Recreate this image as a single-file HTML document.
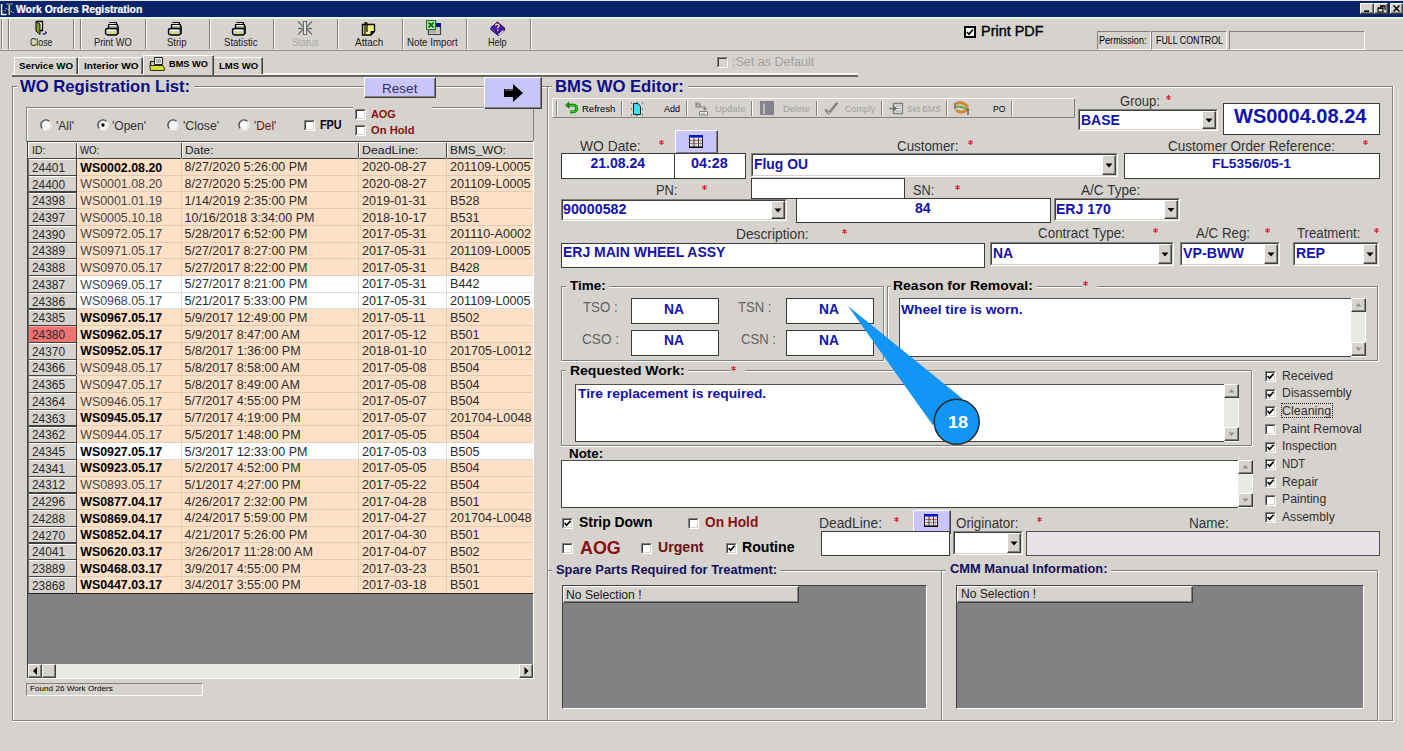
<!DOCTYPE html><html><head><meta charset="utf-8"><style>
html,body{margin:0;padding:0;}
body{width:1403px;height:751px;overflow:hidden;position:relative;background:#d6d3ce;font-family:"Liberation Sans", sans-serif;}
.a{position:absolute;}
.t{position:absolute;white-space:nowrap;font-family:"Liberation Sans", sans-serif;}
</style></head><body>
<div class="a" style="left:0px;top:0px;width:1403px;height:1px;background:#e4e4e4"></div>
<div class="a" style="left:0px;top:1px;width:1403px;height:16px;background:#0a246a"></div>
<div class="a" style="left:0px;top:17px;width:1403px;height:2px;background:#eceeef"></div>
<svg class="a" style="left:0px;top:1px" width="15" height="16"><path d="M1.6 3v10.5h5" stroke="#f0f0f0" stroke-width="1.5" fill="none"/><path d="M6 3h7" stroke="#8890b0" stroke-width="1.2"/><path d="M9.3 4v10" stroke="#c8c8a0" stroke-width="1.6"/><circle cx="6.3" cy="7.5" r="0.6" fill="#fff"/><circle cx="5.3" cy="9.5" r="0.6" fill="#fff"/><circle cx="8.2" cy="8.5" r="0.6" fill="#fff"/><circle cx="11.5" cy="10.5" r="0.6" fill="#fff"/><circle cx="13.2" cy="11.5" r="0.6" fill="#fff"/></svg>
<div class="t" style="left:15.50px;top:3.71px;font-size:10.5px;line-height:10.5px;color:#fff;font-weight:700;transform:scaleX(0.9899);transform-origin:0 0;-webkit-text-stroke:0.2px #fff;">Work Orders Registration</div>
<div class="a" style="left:1360px;top:3px;width:14px;height:11px;background:#d6d3ce;border-top:1px solid #fff;border-left:1px solid #fff;border-bottom:1px solid #404040;border-right:1px solid #404040;box-sizing:border-box"></div>
<div class="a" style="left:1361px;top:4px;width:12px;height:9px;border-bottom:1px solid #808080;border-right:1px solid #808080;box-sizing:border-box"></div>
<div class="a" style="left:1374px;top:3px;width:14px;height:11px;background:#d6d3ce;border-top:1px solid #fff;border-left:1px solid #fff;border-bottom:1px solid #404040;border-right:1px solid #404040;box-sizing:border-box"></div>
<div class="a" style="left:1375px;top:4px;width:12px;height:9px;border-bottom:1px solid #808080;border-right:1px solid #808080;box-sizing:border-box"></div>
<div class="a" style="left:1390px;top:3px;width:13px;height:11px;background:#d6d3ce;border-top:1px solid #fff;border-left:1px solid #fff;border-bottom:1px solid #404040;border-right:1px solid #404040;box-sizing:border-box"></div>
<div class="a" style="left:1391px;top:4px;width:11px;height:9px;border-bottom:1px solid #808080;border-right:1px solid #808080;box-sizing:border-box"></div>
<svg class="a" style="left:1360px;top:3px" width="43" height="11"><path d="M4 8.2h5" stroke="#000" stroke-width="1.6"/><path d="M18 5h5v4h-5z M20 3h5v4" stroke="#000" stroke-width="1.1" fill="none"/><path d="M18 5.2h5M20 3.2h5" stroke="#000" stroke-width="1.6"/><path d="M33.5 2.5l6 6M39.5 2.5l-6 6" stroke="#000" stroke-width="1.5"/></svg>
<div class="a" style="left:0px;top:49px;width:1403px;height:1px;background:#dcd9d4"></div>
<div class="a" style="left:0px;top:50px;width:1403px;height:1px;background:#9a968f"></div>
<div class="a" style="left:1px;top:19px;width:1px;height:30px;background:#808080"></div>
<div class="a" style="left:2px;top:19px;width:1px;height:30px;background:#fff"></div>
<div class="a" style="left:8px;top:19px;width:1px;height:30px;background:#808080"></div>
<div class="a" style="left:9px;top:19px;width:1px;height:30px;background:#fff"></div>
<div class="a" style="left:73px;top:19px;width:1px;height:30px;background:#808080"></div>
<div class="a" style="left:74px;top:19px;width:1px;height:30px;background:#fff"></div>
<div class="a" style="left:80px;top:19px;width:1px;height:30px;background:#808080"></div>
<div class="a" style="left:81px;top:19px;width:1px;height:30px;background:#fff"></div>
<div class="a" style="left:145px;top:19px;width:1px;height:30px;background:#808080"></div>
<div class="a" style="left:146px;top:19px;width:1px;height:30px;background:#fff"></div>
<div class="a" style="left:209px;top:19px;width:1px;height:30px;background:#808080"></div>
<div class="a" style="left:210px;top:19px;width:1px;height:30px;background:#fff"></div>
<div class="a" style="left:273px;top:19px;width:1px;height:30px;background:#808080"></div>
<div class="a" style="left:274px;top:19px;width:1px;height:30px;background:#fff"></div>
<div class="a" style="left:337px;top:19px;width:1px;height:30px;background:#808080"></div>
<div class="a" style="left:338px;top:19px;width:1px;height:30px;background:#fff"></div>
<div class="a" style="left:402px;top:19px;width:1px;height:30px;background:#808080"></div>
<div class="a" style="left:403px;top:19px;width:1px;height:30px;background:#fff"></div>
<div class="a" style="left:466px;top:19px;width:1px;height:30px;background:#808080"></div>
<div class="a" style="left:467px;top:19px;width:1px;height:30px;background:#fff"></div>
<div class="a" style="left:530px;top:19px;width:1px;height:30px;background:#808080"></div>
<div class="a" style="left:531px;top:19px;width:1px;height:30px;background:#fff"></div>
<div class="t" style="left:29.50px;top:37.11px;font-size:10.5px;line-height:10.5px;color:#1a1a1a;font-weight:400;transform:scaleX(0.8380);transform-origin:0 0;">Close</div>
<div class="t" style="left:93.60px;top:37.11px;font-size:10.5px;line-height:10.5px;color:#1a1a1a;font-weight:400;transform:scaleX(0.8852);transform-origin:0 0;">Print WO</div>
<div class="t" style="left:166.60px;top:37.11px;font-size:10.5px;line-height:10.5px;color:#1a1a1a;font-weight:400;transform:scaleX(0.8986);transform-origin:0 0;">Strip</div>
<div class="t" style="left:223.50px;top:37.11px;font-size:10.5px;line-height:10.5px;color:#1a1a1a;font-weight:400;transform:scaleX(0.9113);transform-origin:0 0;">Statistic</div>
<div class="t" style="left:291.60px;top:37.11px;font-size:10.5px;line-height:10.5px;color:#a8a8a8;font-weight:400;transform:scaleX(0.9037);transform-origin:0 0;">Status</div>
<div class="t" style="left:354.50px;top:37.11px;font-size:10.5px;line-height:10.5px;color:#1a1a1a;font-weight:400;transform:scaleX(0.9507);transform-origin:0 0;">Attach</div>
<div class="t" style="left:407.30px;top:37.11px;font-size:10.5px;line-height:10.5px;color:#1a1a1a;font-weight:400;transform:scaleX(0.9243);transform-origin:0 0;">Note Import</div>
<div class="t" style="left:488.30px;top:37.11px;font-size:10.5px;line-height:10.5px;color:#1a1a1a;font-weight:400;transform:scaleX(0.8565);transform-origin:0 0;">Help</div>
<svg class="a" style="left:34px;top:20px" width="16" height="17"><path d="M2.5 1.5h6v9h-6z" fill="#fffff0" stroke="#000" stroke-width="1.3"/><path d="M2 1.5l4 2.5v10.5l-4-3.5z" fill="#7a9a18" stroke="#101000" stroke-width="1"/><path d="M8.5 13.5c1.2 0.8 2.5 0.6 3.5 -0.5" stroke="#303090" stroke-width="1.4" fill="none"/><path d="M11 11l2.2 1.2-1.6 1.8z" fill="#202080"/></svg>
<svg class="a" style="left:104px;top:21px" width="16" height="15"><path d="M5.5 1.5h7v3" fill="none" stroke="#000" stroke-width="1.2"/><path d="M4.5 3.5h9v4h-9z" fill="#b0b0b0" stroke="#000" stroke-width="1.2"/><path d="M5.5 4.5l6 0" stroke="#fff"/><rect x="1.5" y="7.5" width="12" height="6.5" rx="2" fill="#c8c8c8" stroke="#000" stroke-width="1.3"/><path d="M3 9.5h9" stroke="#fff" stroke-width="1"/><ellipse cx="8" cy="11.3" rx="2.6" ry="1.1" fill="#d8f020"/><rect x="13" y="5" width="2" height="8" fill="#202020"/></svg>
<svg class="a" style="left:167px;top:21px" width="16" height="15"><path d="M5.5 1.5h7v3" fill="none" stroke="#000" stroke-width="1.2"/><path d="M4.5 3.5h9v4h-9z" fill="#b0b0b0" stroke="#000" stroke-width="1.2"/><path d="M5.5 4.5l6 0" stroke="#fff"/><rect x="1.5" y="7.5" width="12" height="6.5" rx="2" fill="#c8c8c8" stroke="#000" stroke-width="1.3"/><path d="M3 9.5h9" stroke="#fff" stroke-width="1"/><ellipse cx="8" cy="11.3" rx="2.6" ry="1.1" fill="#d8f020"/><rect x="13" y="5" width="2" height="8" fill="#202020"/></svg>
<svg class="a" style="left:231px;top:21px" width="16" height="15"><path d="M5.5 1.5h7v3" fill="none" stroke="#000" stroke-width="1.2"/><path d="M4.5 3.5h9v4h-9z" fill="#b0b0b0" stroke="#000" stroke-width="1.2"/><path d="M5.5 4.5l6 0" stroke="#fff"/><rect x="1.5" y="7.5" width="12" height="6.5" rx="2" fill="#c8c8c8" stroke="#000" stroke-width="1.3"/><path d="M3 9.5h9" stroke="#fff" stroke-width="1"/><ellipse cx="8" cy="11.3" rx="2.6" ry="1.1" fill="#d8f020"/><rect x="13" y="5" width="2" height="8" fill="#202020"/></svg>
<svg class="a" style="left:297px;top:20px" width="16" height="16"><path d="M1 1.5l5 5M15 1.5l-5 5M1 14.5l5-5M15 14.5l-5-5M1 8.5h14" stroke="#707070" stroke-width="1.3"/><path d="M6.5 1.5h3v13h-3z" fill="#f0f0f0" stroke="#707070" stroke-width="1.2"/></svg>
<svg class="a" style="left:361px;top:21px" width="16" height="15"><path d="M1.5 3.5h12v7l-3.5 3.5h-8.5z" fill="#f0f080" stroke="#000" stroke-width="1.3"/><path d="M10 14l0-3.5h3.5" fill="#202020" stroke="#000"/><path d="M4 13V2.5a1 1 0 0 1 2 0V11" stroke="#000" stroke-width="1.2" fill="none"/></svg>
<svg class="a" style="left:426px;top:20px" width="16" height="16"><path d="M2.5 6.5h12v8h-12z" fill="#c8c8c8" stroke="#404040" stroke-width="1.2"/><path d="M9 3h6v4H9z" fill="#1010a0"/><path d="M4 10h6M4 12h6" stroke="#909090"/><path d="M0.5 0.5h9v9h-9z" fill="#b8f0b8" stroke="#207020" stroke-width="1.2"/><path d="M2.5 2.5l5 5M7.5 2.5l-5 5" stroke="#107010" stroke-width="1.8"/></svg>
<svg class="a" style="left:490px;top:21px" width="16" height="15"><path d="M1 6.5l6.5-5.5 7.5 6.5-6.5 6z" fill="#4818b0" stroke="#200860" stroke-width="1"/><path d="M1 6.5v2l7.5 6 6.5-6" fill="none" stroke="#200860" stroke-width="1.2"/><path d="M8.5 14l5-4.5" stroke="#f0f0ff" stroke-width="1.2"/><path d="M5.5 4.8c0-2 3.5-2 3.5 0 0 1.2-1.5 1.2-1.5 2.7" stroke="#f0e060" stroke-width="1.4" fill="none"/><circle cx="7.8" cy="9.3" r="0.8" fill="#f0e060"/></svg>
<div class="a" style="left:964px;top:26px;width:12px;height:12px;border:2px solid #000;background:#fff;box-sizing:border-box"></div>
<svg class="a" style="left:964px;top:26px" width="12" height="12"><path d="M3 6l2 2.3L9 3.5" stroke="#000" stroke-width="1.7" fill="none"/></svg>
<div class="t" style="left:981.40px;top:24.15px;font-size:14px;line-height:14px;color:#000;font-weight:400;transform:scaleX(1.0317);transform-origin:0 0;-webkit-text-stroke:0.35px #000;">Print PDF</div>
<div class="a" style="left:1097px;top:31px;width:54px;height:19px;border-top:1px solid #808080;border-left:1px solid #808080;border-bottom:1px solid #fff;border-right:1px solid #fff;box-sizing:border-box"></div>
<div class="t" style="left:1098.50px;top:35.53px;font-size:10px;line-height:10px;color:#000;font-weight:400;transform:scaleX(0.9093);transform-origin:0 0;">Permission:</div>
<div class="a" style="left:1151px;top:31px;width:76px;height:19px;border-top:1px solid #808080;border-left:1px solid #808080;border-bottom:1px solid #fff;border-right:1px solid #fff;box-sizing:border-box"></div>
<div class="t" style="left:1155.70px;top:35.53px;font-size:10px;line-height:10px;color:#000;font-weight:400;transform:scaleX(0.8845);transform-origin:0 0;">FULL CONTROL</div>
<div class="a" style="left:1229px;top:31px;width:136px;height:19px;border-top:1px solid #808080;border-left:1px solid #808080;border-bottom:1px solid #fff;border-right:1px solid #fff;box-sizing:border-box"></div>
<div class="a" style="left:717px;top:57px;width:11px;height:11px;background:#d6d3ce;border-top:1px solid #808080;border-left:1px solid #808080;border-bottom:1px solid #fff;border-right:1px solid #fff;box-sizing:border-box"></div>
<div class="a" style="left:718px;top:58px;width:9px;height:9px;border-top:1px solid #404040;border-left:1px solid #404040;border-bottom:1px solid #d6d3ce;border-right:1px solid #d6d3ce;box-sizing:border-box"></div>
<div class="t" style="left:732.00px;top:56.04px;font-size:12px;line-height:12px;color:#a0a0a0;font-weight:400;transform:scaleX(1.0444);transform-origin:0 0;">:Set as Default</div>
<div class="a" style="left:12px;top:73px;width:846px;height:1px;background:#fafafa"></div>
<div class="a" style="left:12px;top:74px;width:846px;height:1px;background:#ecebe8"></div>
<div class="a" style="left:12px;top:75px;width:846px;height:2px;background:#6a6662"></div>
<div class="a" style="left:14px;top:57px;width:64px;height:17px;background:#d6d3ce;border-top:1px solid #fff;border-left:1px solid #fff;border-right:1px solid #404040;box-sizing:border-box"></div>
<div class="a" style="left:76px;top:58px;width:1px;height:16px;background:#808080"></div>
<div class="t" style="left:19.00px;top:61.47px;font-size:9.6px;line-height:9.6px;color:#000;font-weight:700;transform:scaleX(1.0121);transform-origin:0 0;">Service WO</div>
<div class="a" style="left:78px;top:57px;width:65px;height:17px;background:#d6d3ce;border-top:1px solid #fff;border-left:1px solid #fff;border-right:1px solid #404040;box-sizing:border-box"></div>
<div class="a" style="left:141px;top:58px;width:1px;height:16px;background:#808080"></div>
<div class="t" style="left:83.50px;top:61.47px;font-size:9.6px;line-height:9.6px;color:#000;font-weight:700;transform:scaleX(1.0428);transform-origin:0 0;">Interior WO</div>
<div class="a" style="left:213px;top:57px;width:50px;height:17px;background:#d6d3ce;border-top:1px solid #fff;border-left:1px solid #fff;border-right:1px solid #404040;box-sizing:border-box"></div>
<div class="a" style="left:261px;top:58px;width:1px;height:16px;background:#808080"></div>
<div class="t" style="left:218.70px;top:61.47px;font-size:9.6px;line-height:9.6px;color:#000;font-weight:700;transform:scaleX(0.9910);transform-origin:0 0;">LMS WO</div>
<div class="a" style="left:143px;top:55px;width:71px;height:20px;background:#d6d3ce;border-top:1px solid #fff;border-left:1px solid #fff;border-right:1px solid #404040;box-sizing:border-box"></div>
<div class="a" style="left:212px;top:56px;width:1px;height:19px;background:#808080"></div>
<div class="a" style="left:144px;top:73px;width:68px;height:1px;background:#d6d3ce"></div>
<div class="a" style="left:144px;top:74px;width:68px;height:1px;background:#d6d3ce"></div>
<div class="t" style="left:168.50px;top:59.07px;font-size:9.6px;line-height:9.6px;color:#000;font-weight:700;transform:scaleX(0.9622);transform-origin:0 0;">BMS WO</div>
<svg class="a" style="left:149px;top:57px" width="16" height="14"><path d="M5.5 0.5h8v7h-8z" fill="#f0f0f0" stroke="#202020"/><path d="M7 3h5M7 5h5" stroke="#707070"/><path d="M1.5 8.5v-4h4" stroke="#202020" stroke-width="1.2" fill="#c8c890"/><path d="M0.8 8.5h13l1.5 2.5v2.5h-14z" fill="#d0dc30" stroke="#303010" stroke-width="1"/><path d="M2 11h12" stroke="#e8f070" stroke-width="0.8" stroke-dasharray="1 1"/></svg>
<div class="a" style="left:12px;top:86px;width:536px;height:635px;border:1px solid #808080;box-sizing:border-box"></div>
<div class="a" style="left:13px;top:87px;width:534px;height:633px;border-top:1px solid #fff;border-left:1px solid #fff;box-sizing:border-box"></div>
<div class="a" style="left:12px;top:721px;width:537px;height:1px;background:#fff"></div>
<div class="a" style="left:548px;top:86px;width:1px;height:636px;background:#fff"></div>
<div class="a" style="left:17px;top:78px;width:177px;height:16px;background:#d6d3ce"></div>
<div class="t" style="left:20.25px;top:78.01px;font-size:17px;line-height:17px;color:#0c0c8a;font-weight:700;transform:scaleX(0.9791);transform-origin:0 0;">WO Registration List:</div>
<div class="a" style="left:26px;top:107px;width:508px;height:35px;border-top:1px solid #808080;border-left:1px solid #808080;border-right:1px solid #808080;box-sizing:border-box"></div>
<div class="a" style="left:27px;top:108px;width:506px;height:34px;border-top:1px solid #fff;border-left:1px solid #fff;box-sizing:border-box"></div>
<div class="a" style="left:353px;top:105px;width:79px;height:4px;background:#d6d3ce"></div>
<svg class="a" style="left:40px;top:119.3px" width="12" height="12"><path d="M9.6 2.4A5 5 0 0 0 2.4 9.6" stroke="#505050" stroke-width="1.4" fill="none"/><path d="M2.4 9.6A5 5 0 0 0 9.6 2.4" stroke="#f4f4f4" stroke-width="1.2" fill="none"/><circle cx="6" cy="6" r="3.9" fill="#fafafa"/></svg>
<div class="t" style="left:56.40px;top:119.64px;font-size:12px;line-height:12px;color:#303030;font-weight:400;transform:scaleX(1.0047);transform-origin:0 0;">'All'</div>
<svg class="a" style="left:97px;top:119.3px" width="12" height="12"><path d="M9.6 2.4A5 5 0 0 0 2.4 9.6" stroke="#505050" stroke-width="1.4" fill="none"/><path d="M2.4 9.6A5 5 0 0 0 9.6 2.4" stroke="#f4f4f4" stroke-width="1.2" fill="none"/><circle cx="6" cy="6" r="3.9" fill="#fafafa"/><circle cx="6" cy="6" r="1.7" fill="#000"/></svg>
<div class="t" style="left:112.30px;top:119.64px;font-size:12px;line-height:12px;color:#303030;font-weight:400;transform:scaleX(1.0019);transform-origin:0 0;">'Open'</div>
<svg class="a" style="left:167px;top:119.3px" width="12" height="12"><path d="M9.6 2.4A5 5 0 0 0 2.4 9.6" stroke="#505050" stroke-width="1.4" fill="none"/><path d="M2.4 9.6A5 5 0 0 0 9.6 2.4" stroke="#f4f4f4" stroke-width="1.2" fill="none"/><circle cx="6" cy="6" r="3.9" fill="#fafafa"/></svg>
<div class="t" style="left:182.80px;top:119.64px;font-size:12px;line-height:12px;color:#303030;font-weight:400;transform:scaleX(1.0264);transform-origin:0 0;">'Close'</div>
<svg class="a" style="left:238px;top:119.3px" width="12" height="12"><path d="M9.6 2.4A5 5 0 0 0 2.4 9.6" stroke="#505050" stroke-width="1.4" fill="none"/><path d="M2.4 9.6A5 5 0 0 0 9.6 2.4" stroke="#f4f4f4" stroke-width="1.2" fill="none"/><circle cx="6" cy="6" r="3.9" fill="#fafafa"/></svg>
<div class="t" style="left:253.70px;top:119.64px;font-size:12px;line-height:12px;color:#6a1818;font-weight:400;transform:scaleX(0.9874);transform-origin:0 0;">'Del'</div>
<div class="a" style="left:304px;top:120px;width:11px;height:11px;background:#fff;border-top:1px solid #808080;border-left:1px solid #808080;border-bottom:1px solid #fff;border-right:1px solid #fff;box-sizing:border-box"></div>
<div class="a" style="left:305px;top:121px;width:9px;height:9px;border-top:1px solid #404040;border-left:1px solid #404040;border-bottom:1px solid #d6d3ce;border-right:1px solid #d6d3ce;box-sizing:border-box"></div>
<div class="t" style="left:320.00px;top:118.92px;font-size:12.5px;line-height:12.5px;color:#000;font-weight:700;transform:scaleX(0.8640);transform-origin:0 0;">FPU</div>
<div class="a" style="left:355px;top:109px;width:11px;height:11px;background:#fff;border-top:1px solid #808080;border-left:1px solid #808080;border-bottom:1px solid #fff;border-right:1px solid #fff;box-sizing:border-box"></div>
<div class="a" style="left:356px;top:110px;width:9px;height:9px;border-top:1px solid #404040;border-left:1px solid #404040;border-bottom:1px solid #d6d3ce;border-right:1px solid #d6d3ce;box-sizing:border-box"></div>
<div class="t" style="left:370.50px;top:108.87px;font-size:11.5px;line-height:11.5px;color:#8b1010;font-weight:700;transform:scaleX(0.9467);transform-origin:0 0;">AOG</div>
<div class="a" style="left:355px;top:125px;width:11px;height:11px;background:#fff;border-top:1px solid #808080;border-left:1px solid #808080;border-bottom:1px solid #fff;border-right:1px solid #fff;box-sizing:border-box"></div>
<div class="a" style="left:356px;top:126px;width:9px;height:9px;border-top:1px solid #404040;border-left:1px solid #404040;border-bottom:1px solid #d6d3ce;border-right:1px solid #d6d3ce;box-sizing:border-box"></div>
<div class="t" style="left:370.50px;top:124.97px;font-size:11.5px;line-height:11.5px;color:#8b1010;font-weight:700;transform:scaleX(0.9729);transform-origin:0 0;">On Hold</div>
<div class="a" style="left:364px;top:77px;width:72px;height:21px;background:#c9c5fb;border-top:1px solid #fff;border-left:1px solid #fff;border-bottom:1px solid #404040;border-right:1px solid #404040;box-sizing:border-box"></div>
<div class="a" style="left:365px;top:78px;width:70px;height:19px;border-bottom:1px solid #808080;border-right:1px solid #808080;box-sizing:border-box"></div>
<div class="t" style="left:382.00px;top:81.67px;font-size:13.5px;line-height:13.5px;color:#303058;font-weight:400;transform:scaleX(1.0039);transform-origin:0 0;">Reset</div>
<div class="a" style="left:484px;top:77px;width:58px;height:32px;background:#c9c5fb;border-top:1px solid #fff;border-left:1px solid #fff;border-bottom:1px solid #404040;border-right:1px solid #404040;box-sizing:border-box"></div>
<div class="a" style="left:485px;top:78px;width:56px;height:30px;border-bottom:1px solid #808080;border-right:1px solid #808080;box-sizing:border-box"></div>
<svg class="a" style="left:502px;top:82px" width="24" height="22"><path d="M2 7h9V2l10 9-10 9v-5H2z" fill="#000"/><path d="M3 8h8" stroke="#888" stroke-width="1"/></svg>
<div class="a" style="left:27px;top:141px;width:507px;height:538px;background:#838183"></div>
<div class="a" style="left:27px;top:141px;width:1px;height:537px;background:#404040"></div>
<div class="a" style="left:27px;top:141px;width:506px;height:1px;background:#404040"></div>
<div class="a" style="left:28px;top:142px;width:505px;height:17px;background:#d6d3ce"></div>
<div class="a" style="left:28px;top:158px;width:505px;height:1px;background:#404040"></div>
<div class="a" style="left:28px;top:142px;width:1px;height:16px;background:#fff"></div>
<div class="a" style="left:76px;top:142px;width:1px;height:17px;background:#404040"></div>
<div class="a" style="left:77px;top:142px;width:1px;height:16px;background:#fff"></div>
<div class="a" style="left:181px;top:142px;width:1px;height:17px;background:#404040"></div>
<div class="a" style="left:182px;top:142px;width:1px;height:16px;background:#fff"></div>
<div class="a" style="left:358px;top:142px;width:1px;height:17px;background:#404040"></div>
<div class="a" style="left:359px;top:142px;width:1px;height:16px;background:#fff"></div>
<div class="a" style="left:446px;top:142px;width:1px;height:17px;background:#404040"></div>
<div class="a" style="left:447px;top:142px;width:1px;height:16px;background:#fff"></div>
<div class="a" style="left:28px;top:142px;width:505px;height:1px;background:#fff"></div>
<div class="t" style="left:31.70px;top:144.87px;font-size:11.5px;line-height:11.5px;color:#202020;font-weight:400;transform:scaleX(0.9049);transform-origin:0 0;">ID:</div>
<div class="t" style="left:80.20px;top:144.87px;font-size:11.5px;line-height:11.5px;color:#202020;font-weight:400;transform:scaleX(0.8391);transform-origin:0 0;">WO:</div>
<div class="t" style="left:184.50px;top:144.87px;font-size:11.5px;line-height:11.5px;color:#202020;font-weight:400;transform:scaleX(1.0369);transform-origin:0 0;">Date:</div>
<div class="t" style="left:361.50px;top:144.87px;font-size:11.5px;line-height:11.5px;color:#202020;font-weight:400;transform:scaleX(1.0738);transform-origin:0 0;">DeadLine:</div>
<div class="t" style="left:449.50px;top:144.87px;font-size:11.5px;line-height:11.5px;color:#202020;font-weight:400;transform:scaleX(1.0292);transform-origin:0 0;">BMS_WO:</div>
<div class="a" style="left:76px;top:158.2px;width:457px;height:17.216px;background:#fde0c5"></div>
<div class="a" style="left:28px;top:158.2px;width:48px;height:17.216px;background:#d6d3ce"></div>
<div class="a" style="left:76px;top:174.916px;width:457px;height:17.216px;background:#fde0c5"></div>
<div class="a" style="left:28px;top:174.916px;width:48px;height:17.216px;background:#d6d3ce"></div>
<div class="a" style="left:76px;top:191.632px;width:457px;height:17.216px;background:#fde0c5"></div>
<div class="a" style="left:28px;top:191.632px;width:48px;height:17.216px;background:#d6d3ce"></div>
<div class="a" style="left:76px;top:208.34799999999998px;width:457px;height:17.216px;background:#fde0c5"></div>
<div class="a" style="left:28px;top:208.34799999999998px;width:48px;height:17.216px;background:#d6d3ce"></div>
<div class="a" style="left:76px;top:225.064px;width:457px;height:17.216px;background:#fde0c5"></div>
<div class="a" style="left:28px;top:225.064px;width:48px;height:17.216px;background:#d6d3ce"></div>
<div class="a" style="left:76px;top:241.78px;width:457px;height:17.216px;background:#fde0c5"></div>
<div class="a" style="left:28px;top:241.78px;width:48px;height:17.216px;background:#d6d3ce"></div>
<div class="a" style="left:76px;top:258.496px;width:457px;height:17.216px;background:#fde0c5"></div>
<div class="a" style="left:28px;top:258.496px;width:48px;height:17.216px;background:#d6d3ce"></div>
<div class="a" style="left:76px;top:275.212px;width:457px;height:17.216px;background:#fff"></div>
<div class="a" style="left:28px;top:275.212px;width:48px;height:17.216px;background:#d6d3ce"></div>
<div class="a" style="left:76px;top:291.928px;width:457px;height:17.216px;background:#fff"></div>
<div class="a" style="left:28px;top:291.928px;width:48px;height:17.216px;background:#d6d3ce"></div>
<div class="a" style="left:76px;top:308.644px;width:457px;height:17.216px;background:#fde0c5"></div>
<div class="a" style="left:28px;top:308.644px;width:48px;height:17.216px;background:#d6d3ce"></div>
<div class="a" style="left:76px;top:325.36px;width:457px;height:17.216px;background:#fde0c5"></div>
<div class="a" style="left:28px;top:325.36px;width:48px;height:17.216px;background:#f07272"></div>
<div class="a" style="left:76px;top:342.076px;width:457px;height:17.216px;background:#fde0c5"></div>
<div class="a" style="left:28px;top:342.076px;width:48px;height:17.216px;background:#d6d3ce"></div>
<div class="a" style="left:76px;top:358.79200000000003px;width:457px;height:17.216px;background:#fde0c5"></div>
<div class="a" style="left:28px;top:358.79200000000003px;width:48px;height:17.216px;background:#d6d3ce"></div>
<div class="a" style="left:76px;top:375.50800000000004px;width:457px;height:17.216px;background:#fde0c5"></div>
<div class="a" style="left:28px;top:375.50800000000004px;width:48px;height:17.216px;background:#d6d3ce"></div>
<div class="a" style="left:76px;top:392.224px;width:457px;height:17.216px;background:#fde0c5"></div>
<div class="a" style="left:28px;top:392.224px;width:48px;height:17.216px;background:#d6d3ce"></div>
<div class="a" style="left:76px;top:408.94px;width:457px;height:17.216px;background:#fde0c5"></div>
<div class="a" style="left:28px;top:408.94px;width:48px;height:17.216px;background:#d6d3ce"></div>
<div class="a" style="left:76px;top:425.656px;width:457px;height:17.216px;background:#fde0c5"></div>
<div class="a" style="left:28px;top:425.656px;width:48px;height:17.216px;background:#d6d3ce"></div>
<div class="a" style="left:76px;top:442.372px;width:457px;height:17.216px;background:#fff"></div>
<div class="a" style="left:28px;top:442.372px;width:48px;height:17.216px;background:#d6d3ce"></div>
<div class="a" style="left:76px;top:459.088px;width:457px;height:17.216px;background:#fde0c5"></div>
<div class="a" style="left:28px;top:459.088px;width:48px;height:17.216px;background:#d6d3ce"></div>
<div class="a" style="left:76px;top:475.80400000000003px;width:457px;height:17.216px;background:#fde0c5"></div>
<div class="a" style="left:28px;top:475.80400000000003px;width:48px;height:17.216px;background:#d6d3ce"></div>
<div class="a" style="left:76px;top:492.52000000000004px;width:457px;height:17.216px;background:#fde0c5"></div>
<div class="a" style="left:28px;top:492.52000000000004px;width:48px;height:17.216px;background:#d6d3ce"></div>
<div class="a" style="left:76px;top:509.236px;width:457px;height:17.216px;background:#fde0c5"></div>
<div class="a" style="left:28px;top:509.236px;width:48px;height:17.216px;background:#d6d3ce"></div>
<div class="a" style="left:76px;top:525.952px;width:457px;height:17.216px;background:#fde0c5"></div>
<div class="a" style="left:28px;top:525.952px;width:48px;height:17.216px;background:#d6d3ce"></div>
<div class="a" style="left:76px;top:542.668px;width:457px;height:17.216px;background:#fde0c5"></div>
<div class="a" style="left:28px;top:542.668px;width:48px;height:17.216px;background:#d6d3ce"></div>
<div class="a" style="left:76px;top:559.384px;width:457px;height:17.216px;background:#fde0c5"></div>
<div class="a" style="left:28px;top:559.384px;width:48px;height:17.216px;background:#d6d3ce"></div>
<div class="a" style="left:76px;top:576.1px;width:457px;height:17.216px;background:#fde0c5"></div>
<div class="a" style="left:28px;top:576.1px;width:48px;height:17.216px;background:#d6d3ce"></div>
<div class="a" style="left:28px;top:158px;width:505px;height:1px;background:#404040"></div>
<div class="a" style="left:76px;top:174.716px;width:457px;height:1px;background:#e2ccb8"></div>
<div class="a" style="left:181px;top:158.2px;width:1px;height:16.716px;background:#e2ccb8"></div>
<div class="a" style="left:358px;top:158.2px;width:1px;height:16.716px;background:#e2ccb8"></div>
<div class="a" style="left:446px;top:158.2px;width:1px;height:16.716px;background:#e2ccb8"></div>
<div class="a" style="left:28px;top:159.2px;width:48px;height:1px;background:#fff"></div>
<div class="a" style="left:28px;top:174.716px;width:48px;height:1.2px;background:#404040"></div>
<div class="a" style="left:76px;top:158.2px;width:1px;height:16.716px;background:#404040"></div>
<div class="t" style="left:31.70px;top:161.84px;font-size:12px;line-height:12px;color:#2a2a2a;font-weight:400;transform:scaleX(0.9900);transform-origin:0 0;">24401</div>
<div class="t" style="left:80.20px;top:161.50px;font-size:12.4px;line-height:12.4px;color:#000;font-weight:700;transform:scaleX(1.0000);transform-origin:0 0;">WS0002.08.20</div>
<div class="t" style="left:184.50px;top:161.42px;font-size:12.5px;line-height:12.5px;color:#2a2a2a;font-weight:400;transform:scaleX(1.0000);transform-origin:0 0;">8/27/2020 5:26:00 PM</div>
<div class="t" style="left:361.50px;top:161.42px;font-size:12.5px;line-height:12.5px;color:#2a2a2a;font-weight:400;transform:scaleX(1.0100);transform-origin:0 0;">2020-08-27</div>
<div class="t" style="left:449.50px;top:161.42px;font-size:12.5px;line-height:12.5px;color:#2a2a2a;font-weight:400;transform:scaleX(1.0100);transform-origin:0 0;">201109-L0005</div>
<div class="a" style="left:76px;top:191.43200000000002px;width:457px;height:1px;background:#e2ccb8"></div>
<div class="a" style="left:181px;top:174.916px;width:1px;height:16.716px;background:#e2ccb8"></div>
<div class="a" style="left:358px;top:174.916px;width:1px;height:16.716px;background:#e2ccb8"></div>
<div class="a" style="left:446px;top:174.916px;width:1px;height:16.716px;background:#e2ccb8"></div>
<div class="a" style="left:28px;top:175.916px;width:48px;height:1px;background:#fff"></div>
<div class="a" style="left:28px;top:191.43200000000002px;width:48px;height:1.2px;background:#404040"></div>
<div class="a" style="left:76px;top:174.916px;width:1px;height:16.716px;background:#404040"></div>
<div class="t" style="left:31.70px;top:178.56px;font-size:12px;line-height:12px;color:#2a2a2a;font-weight:400;transform:scaleX(0.9900);transform-origin:0 0;">24400</div>
<div class="t" style="left:80.20px;top:178.22px;font-size:12.4px;line-height:12.4px;color:#444;font-weight:400;transform:scaleX(1.0000);transform-origin:0 0;">WS0001.08.20</div>
<div class="t" style="left:184.50px;top:178.13px;font-size:12.5px;line-height:12.5px;color:#2a2a2a;font-weight:400;transform:scaleX(1.0000);transform-origin:0 0;">8/27/2020 5:25:00 PM</div>
<div class="t" style="left:361.50px;top:178.13px;font-size:12.5px;line-height:12.5px;color:#2a2a2a;font-weight:400;transform:scaleX(1.0100);transform-origin:0 0;">2020-08-27</div>
<div class="t" style="left:449.50px;top:178.13px;font-size:12.5px;line-height:12.5px;color:#2a2a2a;font-weight:400;transform:scaleX(1.0100);transform-origin:0 0;">201109-L0005</div>
<div class="a" style="left:76px;top:208.14800000000002px;width:457px;height:1px;background:#e2ccb8"></div>
<div class="a" style="left:181px;top:191.632px;width:1px;height:16.716px;background:#e2ccb8"></div>
<div class="a" style="left:358px;top:191.632px;width:1px;height:16.716px;background:#e2ccb8"></div>
<div class="a" style="left:446px;top:191.632px;width:1px;height:16.716px;background:#e2ccb8"></div>
<div class="a" style="left:28px;top:192.632px;width:48px;height:1px;background:#fff"></div>
<div class="a" style="left:28px;top:208.14800000000002px;width:48px;height:1.2px;background:#404040"></div>
<div class="a" style="left:76px;top:191.632px;width:1px;height:16.716px;background:#404040"></div>
<div class="t" style="left:31.70px;top:195.27px;font-size:12px;line-height:12px;color:#2a2a2a;font-weight:400;transform:scaleX(0.9900);transform-origin:0 0;">24398</div>
<div class="t" style="left:80.20px;top:194.94px;font-size:12.4px;line-height:12.4px;color:#444;font-weight:400;transform:scaleX(1.0000);transform-origin:0 0;">WS0001.01.19</div>
<div class="t" style="left:184.50px;top:194.85px;font-size:12.5px;line-height:12.5px;color:#2a2a2a;font-weight:400;transform:scaleX(1.0000);transform-origin:0 0;">1/14/2019 2:35:00 PM</div>
<div class="t" style="left:361.50px;top:194.85px;font-size:12.5px;line-height:12.5px;color:#2a2a2a;font-weight:400;transform:scaleX(1.0100);transform-origin:0 0;">2019-01-31</div>
<div class="t" style="left:449.50px;top:194.85px;font-size:12.5px;line-height:12.5px;color:#2a2a2a;font-weight:400;transform:scaleX(1.0100);transform-origin:0 0;">B528</div>
<div class="a" style="left:76px;top:224.864px;width:457px;height:1px;background:#e2ccb8"></div>
<div class="a" style="left:181px;top:208.34799999999998px;width:1px;height:16.716px;background:#e2ccb8"></div>
<div class="a" style="left:358px;top:208.34799999999998px;width:1px;height:16.716px;background:#e2ccb8"></div>
<div class="a" style="left:446px;top:208.34799999999998px;width:1px;height:16.716px;background:#e2ccb8"></div>
<div class="a" style="left:28px;top:209.34799999999998px;width:48px;height:1px;background:#fff"></div>
<div class="a" style="left:28px;top:224.864px;width:48px;height:1.2px;background:#404040"></div>
<div class="a" style="left:76px;top:208.34799999999998px;width:1px;height:16.716px;background:#404040"></div>
<div class="t" style="left:31.70px;top:211.99px;font-size:12px;line-height:12px;color:#2a2a2a;font-weight:400;transform:scaleX(0.9900);transform-origin:0 0;">24397</div>
<div class="t" style="left:80.20px;top:211.65px;font-size:12.4px;line-height:12.4px;color:#444;font-weight:400;transform:scaleX(1.0000);transform-origin:0 0;">WS0005.10.18</div>
<div class="t" style="left:184.50px;top:211.57px;font-size:12.5px;line-height:12.5px;color:#2a2a2a;font-weight:400;transform:scaleX(1.0000);transform-origin:0 0;">10/16/2018 3:34:00 PM</div>
<div class="t" style="left:361.50px;top:211.57px;font-size:12.5px;line-height:12.5px;color:#2a2a2a;font-weight:400;transform:scaleX(1.0100);transform-origin:0 0;">2018-10-17</div>
<div class="t" style="left:449.50px;top:211.57px;font-size:12.5px;line-height:12.5px;color:#2a2a2a;font-weight:400;transform:scaleX(1.0100);transform-origin:0 0;">B531</div>
<div class="a" style="left:76px;top:241.58px;width:457px;height:1px;background:#e2ccb8"></div>
<div class="a" style="left:181px;top:225.064px;width:1px;height:16.716px;background:#e2ccb8"></div>
<div class="a" style="left:358px;top:225.064px;width:1px;height:16.716px;background:#e2ccb8"></div>
<div class="a" style="left:446px;top:225.064px;width:1px;height:16.716px;background:#e2ccb8"></div>
<div class="a" style="left:28px;top:226.064px;width:48px;height:1px;background:#fff"></div>
<div class="a" style="left:28px;top:241.58px;width:48px;height:1.2px;background:#404040"></div>
<div class="a" style="left:76px;top:225.064px;width:1px;height:16.716px;background:#404040"></div>
<div class="t" style="left:31.70px;top:228.71px;font-size:12px;line-height:12px;color:#2a2a2a;font-weight:400;transform:scaleX(0.9900);transform-origin:0 0;">24390</div>
<div class="t" style="left:80.20px;top:228.37px;font-size:12.4px;line-height:12.4px;color:#444;font-weight:400;transform:scaleX(1.0000);transform-origin:0 0;">WS0972.05.17</div>
<div class="t" style="left:184.50px;top:228.28px;font-size:12.5px;line-height:12.5px;color:#2a2a2a;font-weight:400;transform:scaleX(1.0000);transform-origin:0 0;">5/28/2017 6:52:00 PM</div>
<div class="t" style="left:361.50px;top:228.28px;font-size:12.5px;line-height:12.5px;color:#2a2a2a;font-weight:400;transform:scaleX(1.0100);transform-origin:0 0;">2017-05-31</div>
<div class="t" style="left:449.50px;top:228.28px;font-size:12.5px;line-height:12.5px;color:#2a2a2a;font-weight:400;transform:scaleX(1.0100);transform-origin:0 0;">201110-A0002</div>
<div class="a" style="left:76px;top:258.296px;width:457px;height:1px;background:#e2ccb8"></div>
<div class="a" style="left:181px;top:241.78px;width:1px;height:16.716px;background:#e2ccb8"></div>
<div class="a" style="left:358px;top:241.78px;width:1px;height:16.716px;background:#e2ccb8"></div>
<div class="a" style="left:446px;top:241.78px;width:1px;height:16.716px;background:#e2ccb8"></div>
<div class="a" style="left:28px;top:242.78px;width:48px;height:1px;background:#fff"></div>
<div class="a" style="left:28px;top:258.296px;width:48px;height:1.2px;background:#404040"></div>
<div class="a" style="left:76px;top:241.78px;width:1px;height:16.716px;background:#404040"></div>
<div class="t" style="left:31.70px;top:245.42px;font-size:12px;line-height:12px;color:#2a2a2a;font-weight:400;transform:scaleX(0.9900);transform-origin:0 0;">24389</div>
<div class="t" style="left:80.20px;top:245.08px;font-size:12.4px;line-height:12.4px;color:#444;font-weight:400;transform:scaleX(1.0000);transform-origin:0 0;">WS0971.05.17</div>
<div class="t" style="left:184.50px;top:245.00px;font-size:12.5px;line-height:12.5px;color:#2a2a2a;font-weight:400;transform:scaleX(1.0000);transform-origin:0 0;">5/27/2017 8:27:00 PM</div>
<div class="t" style="left:361.50px;top:245.00px;font-size:12.5px;line-height:12.5px;color:#2a2a2a;font-weight:400;transform:scaleX(1.0100);transform-origin:0 0;">2017-05-31</div>
<div class="t" style="left:449.50px;top:245.00px;font-size:12.5px;line-height:12.5px;color:#2a2a2a;font-weight:400;transform:scaleX(1.0100);transform-origin:0 0;">201109-L0005</div>
<div class="a" style="left:76px;top:275.012px;width:457px;height:1px;background:#e2ccb8"></div>
<div class="a" style="left:181px;top:258.496px;width:1px;height:16.716px;background:#e2ccb8"></div>
<div class="a" style="left:358px;top:258.496px;width:1px;height:16.716px;background:#e2ccb8"></div>
<div class="a" style="left:446px;top:258.496px;width:1px;height:16.716px;background:#e2ccb8"></div>
<div class="a" style="left:28px;top:259.496px;width:48px;height:1px;background:#fff"></div>
<div class="a" style="left:28px;top:275.012px;width:48px;height:1.2px;background:#404040"></div>
<div class="a" style="left:76px;top:258.496px;width:1px;height:16.716px;background:#404040"></div>
<div class="t" style="left:31.70px;top:262.14px;font-size:12px;line-height:12px;color:#2a2a2a;font-weight:400;transform:scaleX(0.9900);transform-origin:0 0;">24388</div>
<div class="t" style="left:80.20px;top:261.80px;font-size:12.4px;line-height:12.4px;color:#444;font-weight:400;transform:scaleX(1.0000);transform-origin:0 0;">WS0970.05.17</div>
<div class="t" style="left:184.50px;top:261.71px;font-size:12.5px;line-height:12.5px;color:#2a2a2a;font-weight:400;transform:scaleX(1.0000);transform-origin:0 0;">5/27/2017 8:22:00 PM</div>
<div class="t" style="left:361.50px;top:261.71px;font-size:12.5px;line-height:12.5px;color:#2a2a2a;font-weight:400;transform:scaleX(1.0100);transform-origin:0 0;">2017-05-31</div>
<div class="t" style="left:449.50px;top:261.71px;font-size:12.5px;line-height:12.5px;color:#2a2a2a;font-weight:400;transform:scaleX(1.0100);transform-origin:0 0;">B428</div>
<div class="a" style="left:76px;top:291.728px;width:457px;height:1px;background:#dcdcdc"></div>
<div class="a" style="left:181px;top:275.212px;width:1px;height:16.716px;background:#dcdcdc"></div>
<div class="a" style="left:358px;top:275.212px;width:1px;height:16.716px;background:#dcdcdc"></div>
<div class="a" style="left:446px;top:275.212px;width:1px;height:16.716px;background:#dcdcdc"></div>
<div class="a" style="left:28px;top:276.212px;width:48px;height:1px;background:#fff"></div>
<div class="a" style="left:28px;top:291.728px;width:48px;height:1.2px;background:#404040"></div>
<div class="a" style="left:76px;top:275.212px;width:1px;height:16.716px;background:#404040"></div>
<div class="t" style="left:31.70px;top:278.85px;font-size:12px;line-height:12px;color:#2a2a2a;font-weight:400;transform:scaleX(0.9900);transform-origin:0 0;">24387</div>
<div class="t" style="left:80.20px;top:278.52px;font-size:12.4px;line-height:12.4px;color:#444;font-weight:400;transform:scaleX(1.0000);transform-origin:0 0;">WS0969.05.17</div>
<div class="t" style="left:184.50px;top:278.43px;font-size:12.5px;line-height:12.5px;color:#2a2a2a;font-weight:400;transform:scaleX(1.0000);transform-origin:0 0;">5/27/2017 8:21:00 PM</div>
<div class="t" style="left:361.50px;top:278.43px;font-size:12.5px;line-height:12.5px;color:#2a2a2a;font-weight:400;transform:scaleX(1.0100);transform-origin:0 0;">2017-05-31</div>
<div class="t" style="left:449.50px;top:278.43px;font-size:12.5px;line-height:12.5px;color:#2a2a2a;font-weight:400;transform:scaleX(1.0100);transform-origin:0 0;">B442</div>
<div class="a" style="left:76px;top:308.444px;width:457px;height:1px;background:#dcdcdc"></div>
<div class="a" style="left:181px;top:291.928px;width:1px;height:16.716px;background:#dcdcdc"></div>
<div class="a" style="left:358px;top:291.928px;width:1px;height:16.716px;background:#dcdcdc"></div>
<div class="a" style="left:446px;top:291.928px;width:1px;height:16.716px;background:#dcdcdc"></div>
<div class="a" style="left:28px;top:292.928px;width:48px;height:1px;background:#fff"></div>
<div class="a" style="left:28px;top:308.444px;width:48px;height:1.2px;background:#404040"></div>
<div class="a" style="left:76px;top:291.928px;width:1px;height:16.716px;background:#404040"></div>
<div class="t" style="left:31.70px;top:295.57px;font-size:12px;line-height:12px;color:#2a2a2a;font-weight:400;transform:scaleX(0.9900);transform-origin:0 0;">24386</div>
<div class="t" style="left:80.20px;top:295.23px;font-size:12.4px;line-height:12.4px;color:#444;font-weight:400;transform:scaleX(1.0000);transform-origin:0 0;">WS0968.05.17</div>
<div class="t" style="left:184.50px;top:295.15px;font-size:12.5px;line-height:12.5px;color:#2a2a2a;font-weight:400;transform:scaleX(1.0000);transform-origin:0 0;">5/21/2017 5:33:00 PM</div>
<div class="t" style="left:361.50px;top:295.15px;font-size:12.5px;line-height:12.5px;color:#2a2a2a;font-weight:400;transform:scaleX(1.0100);transform-origin:0 0;">2017-05-31</div>
<div class="t" style="left:449.50px;top:295.15px;font-size:12.5px;line-height:12.5px;color:#2a2a2a;font-weight:400;transform:scaleX(1.0100);transform-origin:0 0;">201109-L0005</div>
<div class="a" style="left:76px;top:325.16px;width:457px;height:1px;background:#e2ccb8"></div>
<div class="a" style="left:181px;top:308.644px;width:1px;height:16.716px;background:#e2ccb8"></div>
<div class="a" style="left:358px;top:308.644px;width:1px;height:16.716px;background:#e2ccb8"></div>
<div class="a" style="left:446px;top:308.644px;width:1px;height:16.716px;background:#e2ccb8"></div>
<div class="a" style="left:28px;top:309.644px;width:48px;height:1px;background:#fff"></div>
<div class="a" style="left:28px;top:325.16px;width:48px;height:1.2px;background:#404040"></div>
<div class="a" style="left:76px;top:308.644px;width:1px;height:16.716px;background:#404040"></div>
<div class="t" style="left:31.70px;top:312.29px;font-size:12px;line-height:12px;color:#2a2a2a;font-weight:400;transform:scaleX(0.9900);transform-origin:0 0;">24385</div>
<div class="t" style="left:80.20px;top:311.95px;font-size:12.4px;line-height:12.4px;color:#000;font-weight:700;transform:scaleX(1.0000);transform-origin:0 0;">WS0967.05.17</div>
<div class="t" style="left:184.50px;top:311.86px;font-size:12.5px;line-height:12.5px;color:#2a2a2a;font-weight:400;transform:scaleX(1.0000);transform-origin:0 0;">5/9/2017 12:49:00 PM</div>
<div class="t" style="left:361.50px;top:311.86px;font-size:12.5px;line-height:12.5px;color:#2a2a2a;font-weight:400;transform:scaleX(1.0100);transform-origin:0 0;">2017-05-11</div>
<div class="t" style="left:449.50px;top:311.86px;font-size:12.5px;line-height:12.5px;color:#2a2a2a;font-weight:400;transform:scaleX(1.0100);transform-origin:0 0;">B502</div>
<div class="a" style="left:76px;top:341.87600000000003px;width:457px;height:1px;background:#e2ccb8"></div>
<div class="a" style="left:181px;top:325.36px;width:1px;height:16.716px;background:#e2ccb8"></div>
<div class="a" style="left:358px;top:325.36px;width:1px;height:16.716px;background:#e2ccb8"></div>
<div class="a" style="left:446px;top:325.36px;width:1px;height:16.716px;background:#e2ccb8"></div>
<div class="a" style="left:28px;top:326.36px;width:48px;height:1px;background:#f8a0a0"></div>
<div class="a" style="left:28px;top:341.87600000000003px;width:48px;height:1.2px;background:#404040"></div>
<div class="a" style="left:76px;top:325.36px;width:1px;height:16.716px;background:#404040"></div>
<div class="t" style="left:31.70px;top:329.00px;font-size:12px;line-height:12px;color:#2a2a2a;font-weight:400;transform:scaleX(0.9900);transform-origin:0 0;">24380</div>
<div class="t" style="left:80.20px;top:328.66px;font-size:12.4px;line-height:12.4px;color:#000;font-weight:700;transform:scaleX(1.0000);transform-origin:0 0;">WS0962.05.17</div>
<div class="t" style="left:184.50px;top:328.58px;font-size:12.5px;line-height:12.5px;color:#2a2a2a;font-weight:400;transform:scaleX(1.0000);transform-origin:0 0;">5/9/2017 8:47:00 AM</div>
<div class="t" style="left:361.50px;top:328.58px;font-size:12.5px;line-height:12.5px;color:#2a2a2a;font-weight:400;transform:scaleX(1.0100);transform-origin:0 0;">2017-05-12</div>
<div class="t" style="left:449.50px;top:328.58px;font-size:12.5px;line-height:12.5px;color:#2a2a2a;font-weight:400;transform:scaleX(1.0100);transform-origin:0 0;">B501</div>
<div class="a" style="left:76px;top:358.59200000000004px;width:457px;height:1px;background:#e2ccb8"></div>
<div class="a" style="left:181px;top:342.076px;width:1px;height:16.716px;background:#e2ccb8"></div>
<div class="a" style="left:358px;top:342.076px;width:1px;height:16.716px;background:#e2ccb8"></div>
<div class="a" style="left:446px;top:342.076px;width:1px;height:16.716px;background:#e2ccb8"></div>
<div class="a" style="left:28px;top:343.076px;width:48px;height:1px;background:#fff"></div>
<div class="a" style="left:28px;top:358.59200000000004px;width:48px;height:1.2px;background:#404040"></div>
<div class="a" style="left:76px;top:342.076px;width:1px;height:16.716px;background:#404040"></div>
<div class="t" style="left:31.70px;top:345.72px;font-size:12px;line-height:12px;color:#2a2a2a;font-weight:400;transform:scaleX(0.9900);transform-origin:0 0;">24370</div>
<div class="t" style="left:80.20px;top:345.38px;font-size:12.4px;line-height:12.4px;color:#000;font-weight:700;transform:scaleX(1.0000);transform-origin:0 0;">WS0952.05.17</div>
<div class="t" style="left:184.50px;top:345.29px;font-size:12.5px;line-height:12.5px;color:#2a2a2a;font-weight:400;transform:scaleX(1.0000);transform-origin:0 0;">5/8/2017 1:36:00 PM</div>
<div class="t" style="left:361.50px;top:345.29px;font-size:12.5px;line-height:12.5px;color:#2a2a2a;font-weight:400;transform:scaleX(1.0100);transform-origin:0 0;">2018-01-10</div>
<div class="t" style="left:449.50px;top:345.29px;font-size:12.5px;line-height:12.5px;color:#2a2a2a;font-weight:400;transform:scaleX(1.0100);transform-origin:0 0;">201705-L0012</div>
<div class="a" style="left:76px;top:375.30800000000005px;width:457px;height:1px;background:#e2ccb8"></div>
<div class="a" style="left:181px;top:358.79200000000003px;width:1px;height:16.716px;background:#e2ccb8"></div>
<div class="a" style="left:358px;top:358.79200000000003px;width:1px;height:16.716px;background:#e2ccb8"></div>
<div class="a" style="left:446px;top:358.79200000000003px;width:1px;height:16.716px;background:#e2ccb8"></div>
<div class="a" style="left:28px;top:359.79200000000003px;width:48px;height:1px;background:#fff"></div>
<div class="a" style="left:28px;top:375.30800000000005px;width:48px;height:1.2px;background:#404040"></div>
<div class="a" style="left:76px;top:358.79200000000003px;width:1px;height:16.716px;background:#404040"></div>
<div class="t" style="left:31.70px;top:362.43px;font-size:12px;line-height:12px;color:#2a2a2a;font-weight:400;transform:scaleX(0.9900);transform-origin:0 0;">24366</div>
<div class="t" style="left:80.20px;top:362.10px;font-size:12.4px;line-height:12.4px;color:#444;font-weight:400;transform:scaleX(1.0000);transform-origin:0 0;">WS0948.05.17</div>
<div class="t" style="left:184.50px;top:362.01px;font-size:12.5px;line-height:12.5px;color:#2a2a2a;font-weight:400;transform:scaleX(1.0000);transform-origin:0 0;">5/8/2017 8:58:00 AM</div>
<div class="t" style="left:361.50px;top:362.01px;font-size:12.5px;line-height:12.5px;color:#2a2a2a;font-weight:400;transform:scaleX(1.0100);transform-origin:0 0;">2017-05-08</div>
<div class="t" style="left:449.50px;top:362.01px;font-size:12.5px;line-height:12.5px;color:#2a2a2a;font-weight:400;transform:scaleX(1.0100);transform-origin:0 0;">B504</div>
<div class="a" style="left:76px;top:392.02400000000006px;width:457px;height:1px;background:#e2ccb8"></div>
<div class="a" style="left:181px;top:375.50800000000004px;width:1px;height:16.716px;background:#e2ccb8"></div>
<div class="a" style="left:358px;top:375.50800000000004px;width:1px;height:16.716px;background:#e2ccb8"></div>
<div class="a" style="left:446px;top:375.50800000000004px;width:1px;height:16.716px;background:#e2ccb8"></div>
<div class="a" style="left:28px;top:376.50800000000004px;width:48px;height:1px;background:#fff"></div>
<div class="a" style="left:28px;top:392.02400000000006px;width:48px;height:1.2px;background:#404040"></div>
<div class="a" style="left:76px;top:375.50800000000004px;width:1px;height:16.716px;background:#404040"></div>
<div class="t" style="left:31.70px;top:379.15px;font-size:12px;line-height:12px;color:#2a2a2a;font-weight:400;transform:scaleX(0.9900);transform-origin:0 0;">24365</div>
<div class="t" style="left:80.20px;top:378.81px;font-size:12.4px;line-height:12.4px;color:#444;font-weight:400;transform:scaleX(1.0000);transform-origin:0 0;">WS0947.05.17</div>
<div class="t" style="left:184.50px;top:378.73px;font-size:12.5px;line-height:12.5px;color:#2a2a2a;font-weight:400;transform:scaleX(1.0000);transform-origin:0 0;">5/8/2017 8:49:00 AM</div>
<div class="t" style="left:361.50px;top:378.73px;font-size:12.5px;line-height:12.5px;color:#2a2a2a;font-weight:400;transform:scaleX(1.0100);transform-origin:0 0;">2017-05-08</div>
<div class="t" style="left:449.50px;top:378.73px;font-size:12.5px;line-height:12.5px;color:#2a2a2a;font-weight:400;transform:scaleX(1.0100);transform-origin:0 0;">B504</div>
<div class="a" style="left:76px;top:408.74px;width:457px;height:1px;background:#e2ccb8"></div>
<div class="a" style="left:181px;top:392.224px;width:1px;height:16.716px;background:#e2ccb8"></div>
<div class="a" style="left:358px;top:392.224px;width:1px;height:16.716px;background:#e2ccb8"></div>
<div class="a" style="left:446px;top:392.224px;width:1px;height:16.716px;background:#e2ccb8"></div>
<div class="a" style="left:28px;top:393.224px;width:48px;height:1px;background:#fff"></div>
<div class="a" style="left:28px;top:408.74px;width:48px;height:1.2px;background:#404040"></div>
<div class="a" style="left:76px;top:392.224px;width:1px;height:16.716px;background:#404040"></div>
<div class="t" style="left:31.70px;top:395.87px;font-size:12px;line-height:12px;color:#2a2a2a;font-weight:400;transform:scaleX(0.9900);transform-origin:0 0;">24364</div>
<div class="t" style="left:80.20px;top:395.53px;font-size:12.4px;line-height:12.4px;color:#444;font-weight:400;transform:scaleX(1.0000);transform-origin:0 0;">WS0946.05.17</div>
<div class="t" style="left:184.50px;top:395.44px;font-size:12.5px;line-height:12.5px;color:#2a2a2a;font-weight:400;transform:scaleX(1.0000);transform-origin:0 0;">5/7/2017 4:55:00 PM</div>
<div class="t" style="left:361.50px;top:395.44px;font-size:12.5px;line-height:12.5px;color:#2a2a2a;font-weight:400;transform:scaleX(1.0100);transform-origin:0 0;">2017-05-07</div>
<div class="t" style="left:449.50px;top:395.44px;font-size:12.5px;line-height:12.5px;color:#2a2a2a;font-weight:400;transform:scaleX(1.0100);transform-origin:0 0;">B504</div>
<div class="a" style="left:76px;top:425.456px;width:457px;height:1px;background:#e2ccb8"></div>
<div class="a" style="left:181px;top:408.94px;width:1px;height:16.716px;background:#e2ccb8"></div>
<div class="a" style="left:358px;top:408.94px;width:1px;height:16.716px;background:#e2ccb8"></div>
<div class="a" style="left:446px;top:408.94px;width:1px;height:16.716px;background:#e2ccb8"></div>
<div class="a" style="left:28px;top:409.94px;width:48px;height:1px;background:#fff"></div>
<div class="a" style="left:28px;top:425.456px;width:48px;height:1.2px;background:#404040"></div>
<div class="a" style="left:76px;top:408.94px;width:1px;height:16.716px;background:#404040"></div>
<div class="t" style="left:31.70px;top:412.58px;font-size:12px;line-height:12px;color:#2a2a2a;font-weight:400;transform:scaleX(0.9900);transform-origin:0 0;">24363</div>
<div class="t" style="left:80.20px;top:412.24px;font-size:12.4px;line-height:12.4px;color:#000;font-weight:700;transform:scaleX(1.0000);transform-origin:0 0;">WS0945.05.17</div>
<div class="t" style="left:184.50px;top:412.16px;font-size:12.5px;line-height:12.5px;color:#2a2a2a;font-weight:400;transform:scaleX(1.0000);transform-origin:0 0;">5/7/2017 4:19:00 PM</div>
<div class="t" style="left:361.50px;top:412.16px;font-size:12.5px;line-height:12.5px;color:#2a2a2a;font-weight:400;transform:scaleX(1.0100);transform-origin:0 0;">2017-05-07</div>
<div class="t" style="left:449.50px;top:412.16px;font-size:12.5px;line-height:12.5px;color:#2a2a2a;font-weight:400;transform:scaleX(1.0100);transform-origin:0 0;">201704-L0048</div>
<div class="a" style="left:76px;top:442.172px;width:457px;height:1px;background:#e2ccb8"></div>
<div class="a" style="left:181px;top:425.656px;width:1px;height:16.716px;background:#e2ccb8"></div>
<div class="a" style="left:358px;top:425.656px;width:1px;height:16.716px;background:#e2ccb8"></div>
<div class="a" style="left:446px;top:425.656px;width:1px;height:16.716px;background:#e2ccb8"></div>
<div class="a" style="left:28px;top:426.656px;width:48px;height:1px;background:#fff"></div>
<div class="a" style="left:28px;top:442.172px;width:48px;height:1.2px;background:#404040"></div>
<div class="a" style="left:76px;top:425.656px;width:1px;height:16.716px;background:#404040"></div>
<div class="t" style="left:31.70px;top:429.30px;font-size:12px;line-height:12px;color:#2a2a2a;font-weight:400;transform:scaleX(0.9900);transform-origin:0 0;">24362</div>
<div class="t" style="left:80.20px;top:428.96px;font-size:12.4px;line-height:12.4px;color:#444;font-weight:400;transform:scaleX(1.0000);transform-origin:0 0;">WS0944.05.17</div>
<div class="t" style="left:184.50px;top:428.87px;font-size:12.5px;line-height:12.5px;color:#2a2a2a;font-weight:400;transform:scaleX(1.0000);transform-origin:0 0;">5/5/2017 1:48:00 PM</div>
<div class="t" style="left:361.50px;top:428.87px;font-size:12.5px;line-height:12.5px;color:#2a2a2a;font-weight:400;transform:scaleX(1.0100);transform-origin:0 0;">2017-05-05</div>
<div class="t" style="left:449.50px;top:428.87px;font-size:12.5px;line-height:12.5px;color:#2a2a2a;font-weight:400;transform:scaleX(1.0100);transform-origin:0 0;">B504</div>
<div class="a" style="left:76px;top:458.88800000000003px;width:457px;height:1px;background:#dcdcdc"></div>
<div class="a" style="left:181px;top:442.372px;width:1px;height:16.716px;background:#dcdcdc"></div>
<div class="a" style="left:358px;top:442.372px;width:1px;height:16.716px;background:#dcdcdc"></div>
<div class="a" style="left:446px;top:442.372px;width:1px;height:16.716px;background:#dcdcdc"></div>
<div class="a" style="left:28px;top:443.372px;width:48px;height:1px;background:#fff"></div>
<div class="a" style="left:28px;top:458.88800000000003px;width:48px;height:1.2px;background:#404040"></div>
<div class="a" style="left:76px;top:442.372px;width:1px;height:16.716px;background:#404040"></div>
<div class="t" style="left:31.70px;top:446.01px;font-size:12px;line-height:12px;color:#2a2a2a;font-weight:400;transform:scaleX(0.9900);transform-origin:0 0;">24345</div>
<div class="t" style="left:80.20px;top:445.68px;font-size:12.4px;line-height:12.4px;color:#000;font-weight:700;transform:scaleX(1.0000);transform-origin:0 0;">WS0927.05.17</div>
<div class="t" style="left:184.50px;top:445.59px;font-size:12.5px;line-height:12.5px;color:#2a2a2a;font-weight:400;transform:scaleX(1.0000);transform-origin:0 0;">5/3/2017 12:33:00 PM</div>
<div class="t" style="left:361.50px;top:445.59px;font-size:12.5px;line-height:12.5px;color:#2a2a2a;font-weight:400;transform:scaleX(1.0100);transform-origin:0 0;">2017-05-03</div>
<div class="t" style="left:449.50px;top:445.59px;font-size:12.5px;line-height:12.5px;color:#2a2a2a;font-weight:400;transform:scaleX(1.0100);transform-origin:0 0;">B505</div>
<div class="a" style="left:76px;top:475.60400000000004px;width:457px;height:1px;background:#e2ccb8"></div>
<div class="a" style="left:181px;top:459.088px;width:1px;height:16.716px;background:#e2ccb8"></div>
<div class="a" style="left:358px;top:459.088px;width:1px;height:16.716px;background:#e2ccb8"></div>
<div class="a" style="left:446px;top:459.088px;width:1px;height:16.716px;background:#e2ccb8"></div>
<div class="a" style="left:28px;top:460.088px;width:48px;height:1px;background:#fff"></div>
<div class="a" style="left:28px;top:475.60400000000004px;width:48px;height:1.2px;background:#404040"></div>
<div class="a" style="left:76px;top:459.088px;width:1px;height:16.716px;background:#404040"></div>
<div class="t" style="left:31.70px;top:462.73px;font-size:12px;line-height:12px;color:#2a2a2a;font-weight:400;transform:scaleX(0.9900);transform-origin:0 0;">24341</div>
<div class="t" style="left:80.20px;top:462.39px;font-size:12.4px;line-height:12.4px;color:#000;font-weight:700;transform:scaleX(1.0000);transform-origin:0 0;">WS0923.05.17</div>
<div class="t" style="left:184.50px;top:462.31px;font-size:12.5px;line-height:12.5px;color:#2a2a2a;font-weight:400;transform:scaleX(1.0000);transform-origin:0 0;">5/2/2017 4:52:00 PM</div>
<div class="t" style="left:361.50px;top:462.31px;font-size:12.5px;line-height:12.5px;color:#2a2a2a;font-weight:400;transform:scaleX(1.0100);transform-origin:0 0;">2017-05-05</div>
<div class="t" style="left:449.50px;top:462.31px;font-size:12.5px;line-height:12.5px;color:#2a2a2a;font-weight:400;transform:scaleX(1.0100);transform-origin:0 0;">B504</div>
<div class="a" style="left:76px;top:492.32000000000005px;width:457px;height:1px;background:#e2ccb8"></div>
<div class="a" style="left:181px;top:475.80400000000003px;width:1px;height:16.716px;background:#e2ccb8"></div>
<div class="a" style="left:358px;top:475.80400000000003px;width:1px;height:16.716px;background:#e2ccb8"></div>
<div class="a" style="left:446px;top:475.80400000000003px;width:1px;height:16.716px;background:#e2ccb8"></div>
<div class="a" style="left:28px;top:476.80400000000003px;width:48px;height:1px;background:#fff"></div>
<div class="a" style="left:28px;top:492.32000000000005px;width:48px;height:1.2px;background:#404040"></div>
<div class="a" style="left:76px;top:475.80400000000003px;width:1px;height:16.716px;background:#404040"></div>
<div class="t" style="left:31.70px;top:479.45px;font-size:12px;line-height:12px;color:#2a2a2a;font-weight:400;transform:scaleX(0.9900);transform-origin:0 0;">24312</div>
<div class="t" style="left:80.20px;top:479.11px;font-size:12.4px;line-height:12.4px;color:#444;font-weight:400;transform:scaleX(1.0000);transform-origin:0 0;">WS0893.05.17</div>
<div class="t" style="left:184.50px;top:479.02px;font-size:12.5px;line-height:12.5px;color:#2a2a2a;font-weight:400;transform:scaleX(1.0000);transform-origin:0 0;">5/1/2017 4:27:00 PM</div>
<div class="t" style="left:361.50px;top:479.02px;font-size:12.5px;line-height:12.5px;color:#2a2a2a;font-weight:400;transform:scaleX(1.0100);transform-origin:0 0;">2017-05-22</div>
<div class="t" style="left:449.50px;top:479.02px;font-size:12.5px;line-height:12.5px;color:#2a2a2a;font-weight:400;transform:scaleX(1.0100);transform-origin:0 0;">B504</div>
<div class="a" style="left:76px;top:509.03600000000006px;width:457px;height:1px;background:#e2ccb8"></div>
<div class="a" style="left:181px;top:492.52000000000004px;width:1px;height:16.716px;background:#e2ccb8"></div>
<div class="a" style="left:358px;top:492.52000000000004px;width:1px;height:16.716px;background:#e2ccb8"></div>
<div class="a" style="left:446px;top:492.52000000000004px;width:1px;height:16.716px;background:#e2ccb8"></div>
<div class="a" style="left:28px;top:493.52000000000004px;width:48px;height:1px;background:#fff"></div>
<div class="a" style="left:28px;top:509.03600000000006px;width:48px;height:1.2px;background:#404040"></div>
<div class="a" style="left:76px;top:492.52000000000004px;width:1px;height:16.716px;background:#404040"></div>
<div class="t" style="left:31.70px;top:496.16px;font-size:12px;line-height:12px;color:#2a2a2a;font-weight:400;transform:scaleX(0.9900);transform-origin:0 0;">24296</div>
<div class="t" style="left:80.20px;top:495.82px;font-size:12.4px;line-height:12.4px;color:#000;font-weight:700;transform:scaleX(1.0000);transform-origin:0 0;">WS0877.04.17</div>
<div class="t" style="left:184.50px;top:495.74px;font-size:12.5px;line-height:12.5px;color:#2a2a2a;font-weight:400;transform:scaleX(1.0000);transform-origin:0 0;">4/26/2017 2:32:00 PM</div>
<div class="t" style="left:361.50px;top:495.74px;font-size:12.5px;line-height:12.5px;color:#2a2a2a;font-weight:400;transform:scaleX(1.0100);transform-origin:0 0;">2017-04-28</div>
<div class="t" style="left:449.50px;top:495.74px;font-size:12.5px;line-height:12.5px;color:#2a2a2a;font-weight:400;transform:scaleX(1.0100);transform-origin:0 0;">B501</div>
<div class="a" style="left:76px;top:525.752px;width:457px;height:1px;background:#e2ccb8"></div>
<div class="a" style="left:181px;top:509.236px;width:1px;height:16.716px;background:#e2ccb8"></div>
<div class="a" style="left:358px;top:509.236px;width:1px;height:16.716px;background:#e2ccb8"></div>
<div class="a" style="left:446px;top:509.236px;width:1px;height:16.716px;background:#e2ccb8"></div>
<div class="a" style="left:28px;top:510.236px;width:48px;height:1px;background:#fff"></div>
<div class="a" style="left:28px;top:525.752px;width:48px;height:1.2px;background:#404040"></div>
<div class="a" style="left:76px;top:509.236px;width:1px;height:16.716px;background:#404040"></div>
<div class="t" style="left:31.70px;top:512.88px;font-size:12px;line-height:12px;color:#2a2a2a;font-weight:400;transform:scaleX(0.9900);transform-origin:0 0;">24288</div>
<div class="t" style="left:80.20px;top:512.54px;font-size:12.4px;line-height:12.4px;color:#000;font-weight:700;transform:scaleX(1.0000);transform-origin:0 0;">WS0869.04.17</div>
<div class="t" style="left:184.50px;top:512.45px;font-size:12.5px;line-height:12.5px;color:#2a2a2a;font-weight:400;transform:scaleX(1.0000);transform-origin:0 0;">4/24/2017 5:59:00 PM</div>
<div class="t" style="left:361.50px;top:512.45px;font-size:12.5px;line-height:12.5px;color:#2a2a2a;font-weight:400;transform:scaleX(1.0100);transform-origin:0 0;">2017-04-27</div>
<div class="t" style="left:449.50px;top:512.45px;font-size:12.5px;line-height:12.5px;color:#2a2a2a;font-weight:400;transform:scaleX(1.0100);transform-origin:0 0;">201704-L0048</div>
<div class="a" style="left:76px;top:542.468px;width:457px;height:1px;background:#e2ccb8"></div>
<div class="a" style="left:181px;top:525.952px;width:1px;height:16.716px;background:#e2ccb8"></div>
<div class="a" style="left:358px;top:525.952px;width:1px;height:16.716px;background:#e2ccb8"></div>
<div class="a" style="left:446px;top:525.952px;width:1px;height:16.716px;background:#e2ccb8"></div>
<div class="a" style="left:28px;top:526.952px;width:48px;height:1px;background:#fff"></div>
<div class="a" style="left:28px;top:542.468px;width:48px;height:1.2px;background:#404040"></div>
<div class="a" style="left:76px;top:525.952px;width:1px;height:16.716px;background:#404040"></div>
<div class="t" style="left:31.70px;top:529.59px;font-size:12px;line-height:12px;color:#2a2a2a;font-weight:400;transform:scaleX(0.9900);transform-origin:0 0;">24270</div>
<div class="t" style="left:80.20px;top:529.26px;font-size:12.4px;line-height:12.4px;color:#000;font-weight:700;transform:scaleX(1.0000);transform-origin:0 0;">WS0852.04.17</div>
<div class="t" style="left:184.50px;top:529.17px;font-size:12.5px;line-height:12.5px;color:#2a2a2a;font-weight:400;transform:scaleX(1.0000);transform-origin:0 0;">4/21/2017 5:26:00 PM</div>
<div class="t" style="left:361.50px;top:529.17px;font-size:12.5px;line-height:12.5px;color:#2a2a2a;font-weight:400;transform:scaleX(1.0100);transform-origin:0 0;">2017-04-30</div>
<div class="t" style="left:449.50px;top:529.17px;font-size:12.5px;line-height:12.5px;color:#2a2a2a;font-weight:400;transform:scaleX(1.0100);transform-origin:0 0;">B501</div>
<div class="a" style="left:76px;top:559.184px;width:457px;height:1px;background:#e2ccb8"></div>
<div class="a" style="left:181px;top:542.668px;width:1px;height:16.716px;background:#e2ccb8"></div>
<div class="a" style="left:358px;top:542.668px;width:1px;height:16.716px;background:#e2ccb8"></div>
<div class="a" style="left:446px;top:542.668px;width:1px;height:16.716px;background:#e2ccb8"></div>
<div class="a" style="left:28px;top:543.668px;width:48px;height:1px;background:#fff"></div>
<div class="a" style="left:28px;top:559.184px;width:48px;height:1.2px;background:#404040"></div>
<div class="a" style="left:76px;top:542.668px;width:1px;height:16.716px;background:#404040"></div>
<div class="t" style="left:31.70px;top:546.31px;font-size:12px;line-height:12px;color:#2a2a2a;font-weight:400;transform:scaleX(0.9900);transform-origin:0 0;">24041</div>
<div class="t" style="left:80.20px;top:545.97px;font-size:12.4px;line-height:12.4px;color:#000;font-weight:700;transform:scaleX(1.0000);transform-origin:0 0;">WS0620.03.17</div>
<div class="t" style="left:184.50px;top:545.89px;font-size:12.5px;line-height:12.5px;color:#2a2a2a;font-weight:400;transform:scaleX(1.0000);transform-origin:0 0;">3/26/2017 11:28:00 AM</div>
<div class="t" style="left:361.50px;top:545.89px;font-size:12.5px;line-height:12.5px;color:#2a2a2a;font-weight:400;transform:scaleX(1.0100);transform-origin:0 0;">2017-04-07</div>
<div class="t" style="left:449.50px;top:545.89px;font-size:12.5px;line-height:12.5px;color:#2a2a2a;font-weight:400;transform:scaleX(1.0100);transform-origin:0 0;">B502</div>
<div class="a" style="left:76px;top:575.9px;width:457px;height:1px;background:#e2ccb8"></div>
<div class="a" style="left:181px;top:559.384px;width:1px;height:16.716px;background:#e2ccb8"></div>
<div class="a" style="left:358px;top:559.384px;width:1px;height:16.716px;background:#e2ccb8"></div>
<div class="a" style="left:446px;top:559.384px;width:1px;height:16.716px;background:#e2ccb8"></div>
<div class="a" style="left:28px;top:560.384px;width:48px;height:1px;background:#fff"></div>
<div class="a" style="left:28px;top:575.9px;width:48px;height:1.2px;background:#404040"></div>
<div class="a" style="left:76px;top:559.384px;width:1px;height:16.716px;background:#404040"></div>
<div class="t" style="left:31.70px;top:563.03px;font-size:12px;line-height:12px;color:#2a2a2a;font-weight:400;transform:scaleX(0.9900);transform-origin:0 0;">23889</div>
<div class="t" style="left:80.20px;top:562.69px;font-size:12.4px;line-height:12.4px;color:#000;font-weight:700;transform:scaleX(1.0000);transform-origin:0 0;">WS0468.03.17</div>
<div class="t" style="left:184.50px;top:562.60px;font-size:12.5px;line-height:12.5px;color:#2a2a2a;font-weight:400;transform:scaleX(1.0000);transform-origin:0 0;">3/9/2017 4:55:00 PM</div>
<div class="t" style="left:361.50px;top:562.60px;font-size:12.5px;line-height:12.5px;color:#2a2a2a;font-weight:400;transform:scaleX(1.0100);transform-origin:0 0;">2017-03-23</div>
<div class="t" style="left:449.50px;top:562.60px;font-size:12.5px;line-height:12.5px;color:#2a2a2a;font-weight:400;transform:scaleX(1.0100);transform-origin:0 0;">B501</div>
<div class="a" style="left:76px;top:592.616px;width:457px;height:1px;background:#e2ccb8"></div>
<div class="a" style="left:181px;top:576.1px;width:1px;height:16.716px;background:#e2ccb8"></div>
<div class="a" style="left:358px;top:576.1px;width:1px;height:16.716px;background:#e2ccb8"></div>
<div class="a" style="left:446px;top:576.1px;width:1px;height:16.716px;background:#e2ccb8"></div>
<div class="a" style="left:28px;top:577.1px;width:48px;height:1px;background:#fff"></div>
<div class="a" style="left:28px;top:592.616px;width:48px;height:1.2px;background:#404040"></div>
<div class="a" style="left:76px;top:576.1px;width:1px;height:16.716px;background:#404040"></div>
<div class="t" style="left:31.70px;top:579.74px;font-size:12px;line-height:12px;color:#2a2a2a;font-weight:400;transform:scaleX(0.9900);transform-origin:0 0;">23868</div>
<div class="t" style="left:80.20px;top:579.40px;font-size:12.4px;line-height:12.4px;color:#000;font-weight:700;transform:scaleX(1.0000);transform-origin:0 0;">WS0447.03.17</div>
<div class="t" style="left:184.50px;top:579.32px;font-size:12.5px;line-height:12.5px;color:#2a2a2a;font-weight:400;transform:scaleX(1.0000);transform-origin:0 0;">3/4/2017 3:55:00 PM</div>
<div class="t" style="left:361.50px;top:579.32px;font-size:12.5px;line-height:12.5px;color:#2a2a2a;font-weight:400;transform:scaleX(1.0100);transform-origin:0 0;">2017-03-18</div>
<div class="t" style="left:449.50px;top:579.32px;font-size:12.5px;line-height:12.5px;color:#2a2a2a;font-weight:400;transform:scaleX(1.0100);transform-origin:0 0;">B501</div>
<div class="a" style="left:28px;top:158px;width:1px;height:435px;background:#6a6a6a"></div>
<div class="a" style="left:28px;top:592.616px;width:505px;height:1.5px;background:#202020"></div>
<div class="a" style="left:533px;top:141px;width:1px;height:538px;background:#fff"></div>
<div class="a" style="left:28px;top:664px;width:505px;height:14px;background:#ebe9e5"></div>
<div class="a" style="left:28px;top:664px;width:14px;height:14px;background:#d6d3ce;border-top:1px solid #fff;border-left:1px solid #fff;border-bottom:1px solid #404040;border-right:1px solid #404040;box-sizing:border-box"></div>
<div class="a" style="left:29px;top:665px;width:12px;height:12px;border-bottom:1px solid #808080;border-right:1px solid #808080;box-sizing:border-box"></div>
<svg class="a" style="left:28px;top:664px" width="14" height="14"><path d="M5 7l4-4v8z" fill="#000"/></svg>
<div class="a" style="left:42px;top:664px;width:14px;height:14px;background:#d6d3ce;border-top:1px solid #fff;border-left:1px solid #fff;border-bottom:1px solid #404040;border-right:1px solid #404040;box-sizing:border-box"></div>
<div class="a" style="left:43px;top:665px;width:12px;height:12px;border-bottom:1px solid #808080;border-right:1px solid #808080;box-sizing:border-box"></div>
<div class="a" style="left:519px;top:664px;width:14px;height:14px;background:#d6d3ce;border-top:1px solid #fff;border-left:1px solid #fff;border-bottom:1px solid #404040;border-right:1px solid #404040;box-sizing:border-box"></div>
<div class="a" style="left:520px;top:665px;width:12px;height:12px;border-bottom:1px solid #808080;border-right:1px solid #808080;box-sizing:border-box"></div>
<svg class="a" style="left:519px;top:664px" width="14" height="14"><path d="M9.5 7l-4-4v8z" fill="#000"/></svg>
<div class="a" style="left:27px;top:678px;width:507px;height:1px;background:#fff"></div>
<div class="a" style="left:26px;top:683px;width:177px;height:13px;border-top:1px solid #808080;border-left:1px solid #808080;border-bottom:1px solid #fff;border-right:1px solid #fff;box-sizing:border-box"></div>
<div class="t" style="left:29.50px;top:684.63px;font-size:8px;line-height:8px;color:#000;font-weight:400;transform:scaleX(1.0195);transform-origin:0 0;">Found 26 Work Orders</div>
<div class="a" style="left:547px;top:86px;width:846px;height:635px;border:1px solid #808080;box-sizing:border-box"></div>
<div class="a" style="left:548px;top:87px;width:844px;height:633px;border-top:1px solid #fff;border-left:1px solid #fff;box-sizing:border-box"></div>
<div class="a" style="left:547px;top:721px;width:847px;height:1px;background:#fff"></div>
<div class="a" style="left:1393px;top:86px;width:1px;height:636px;background:#fff"></div>
<div class="a" style="left:552px;top:78px;width:136px;height:16px;background:#d6d3ce"></div>
<div class="t" style="left:555.30px;top:77.91px;font-size:17px;line-height:17px;color:#0c0c8a;font-weight:700;transform:scaleX(0.9805);transform-origin:0 0;">BMS WO Editor:</div>
<div class="a" style="left:552px;top:98px;width:523px;height:20px;border-top:1px solid #fff;border-left:1px solid #fff;border-bottom:1px solid #808080;border-right:1px solid #808080;box-sizing:border-box"></div>
<div class="a" style="left:556px;top:101px;width:1px;height:15px;background:#808080"></div>
<div class="a" style="left:557px;top:101px;width:1px;height:15px;background:#fff"></div>
<div class="a" style="left:621px;top:101px;width:1px;height:15px;background:#808080"></div>
<div class="a" style="left:622px;top:101px;width:1px;height:15px;background:#fff"></div>
<div class="a" style="left:686px;top:101px;width:1px;height:15px;background:#808080"></div>
<div class="a" style="left:687px;top:101px;width:1px;height:15px;background:#fff"></div>
<div class="a" style="left:751px;top:101px;width:1px;height:15px;background:#808080"></div>
<div class="a" style="left:752px;top:101px;width:1px;height:15px;background:#fff"></div>
<div class="a" style="left:816px;top:101px;width:1px;height:15px;background:#808080"></div>
<div class="a" style="left:817px;top:101px;width:1px;height:15px;background:#fff"></div>
<div class="a" style="left:881px;top:101px;width:1px;height:15px;background:#808080"></div>
<div class="a" style="left:882px;top:101px;width:1px;height:15px;background:#fff"></div>
<div class="a" style="left:946px;top:101px;width:1px;height:15px;background:#808080"></div>
<div class="a" style="left:947px;top:101px;width:1px;height:15px;background:#fff"></div>
<div class="a" style="left:1011px;top:101px;width:1px;height:15px;background:#808080"></div>
<div class="a" style="left:1012px;top:101px;width:1px;height:15px;background:#fff"></div>
<div class="t" style="left:581.60px;top:103.50px;font-size:9.8px;line-height:9.8px;color:#000;font-weight:400;transform:scaleX(0.9706);transform-origin:0 0;">Refresh</div>
<div class="t" style="left:664.00px;top:103.50px;font-size:9.8px;line-height:9.8px;color:#000;font-weight:400;transform:scaleX(0.9177);transform-origin:0 0;">Add</div>
<div class="t" style="left:714.60px;top:103.50px;font-size:9.8px;line-height:9.8px;color:#a0a0a0;font-weight:400;transform:scaleX(0.9619);transform-origin:0 0;">Update</div>
<div class="t" style="left:783.20px;top:103.50px;font-size:9.8px;line-height:9.8px;color:#a0a0a0;font-weight:400;transform:scaleX(0.9459);transform-origin:0 0;">Delete</div>
<div class="t" style="left:844.80px;top:103.50px;font-size:9.8px;line-height:9.8px;color:#a0a0a0;font-weight:400;transform:scaleX(0.9120);transform-origin:0 0;">Comply</div>
<div class="t" style="left:906.90px;top:103.50px;font-size:9.8px;line-height:9.8px;color:#a0a0a0;font-weight:400;transform:scaleX(0.8766);transform-origin:0 0;">Set BMS</div>
<div class="t" style="left:993.30px;top:103.50px;font-size:9.8px;line-height:9.8px;color:#000;font-weight:400;transform:scaleX(0.8756);transform-origin:0 0;">PO</div>
<svg class="a" style="left:565px;top:102px" width="14" height="13"><path d="M3 3.2h5.5a3.3 3.3 0 0 1 0 6.6H5" stroke="#006000" stroke-width="2.8" fill="none"/><path d="M3 3.2h5.5a3.3 3.3 0 0 1 0 6.6H5" stroke="#20d020" stroke-width="1.4" fill="none"/><path d="M0.5 3.2l3.5-3v6z" fill="#10a010" stroke="#005000" stroke-width="0.6"/></svg>
<svg class="a" style="left:630px;top:102px" width="14" height="14"><path d="M3.5 1.5h4.5l2.5 3v8h-7z" fill="#40e0e8" stroke="#003040" stroke-width="1"/><path d="M1 1h1M12 1h1M1 7h1M12 7h1M1 13h1M12 13h1M7 0v1M7 13v1" stroke="#303030" stroke-width="1"/></svg>
<svg class="a" style="left:695px;top:102px" width="15" height="14"><path d="M1 1h3a1 1 0 0 1 0 2h-3zM1 3h3.3a1 1 0 0 1 0 2H1z" fill="none" stroke="#808080" stroke-width="1.2"/><path d="M6 5h4v3M8.5 6.5l1.5 1.5 1.5-1.5" stroke="#808080" stroke-width="1.1" fill="none"/><path d="M4.5 9.5h8v3.5h-8z" fill="#f4f4f4" stroke="#808080"/><path d="M6 11.5h4" stroke="#a0a0a0"/></svg>
<svg class="a" style="left:760px;top:101px" width="15" height="15"><rect x="0" y="0" width="14" height="14" fill="#86848a"/><path d="M4 4v9" stroke="#e0e0e0" stroke-width="1.2"/><path d="M3 3.2h2" stroke="#c8c8c8"/></svg>
<svg class="a" style="left:824px;top:101px" width="16" height="14"><path d="M1.5 8.5l3 4L13.5 1.5" stroke="#858585" stroke-width="2.6" fill="none" stroke-linejoin="round"/><path d="M5 12.5l-0.5 -1.5" stroke="#f0f0f0" stroke-width="1"/></svg>
<svg class="a" style="left:889px;top:102px" width="15" height="13"><path d="M4.5 1.5h9v10h-9z" fill="#e8e8e8" stroke="#808080" stroke-width="1.3"/><path d="M7 4h5M7 6.5h5M7 9h5" stroke="#a0a0a0"/><path d="M0.5 6.5h6M4.5 4l2.5 2.5-2.5 2.5" stroke="#707070" stroke-width="1.6" fill="none"/></svg>
<svg class="a" style="left:954px;top:101px" width="16" height="15"><path d="M2 3c3-2.5 8-2 12 3" stroke="#d08838" stroke-width="3" fill="none"/><path d="M2 9c3 3 8 3 12 -1" stroke="#d08838" stroke-width="3" fill="none"/><path d="M2 6c4-1 8 0 11 3" stroke="#70b040" stroke-width="2.2" fill="none"/><path d="M1 2v6M14 7v7" stroke="#602000" stroke-width="1"/></svg>
<div class="t" style="left:1120.40px;top:94.05px;font-size:14px;line-height:14px;color:#333333;font-weight:400;transform:scaleX(0.9323);transform-origin:0 0;">Group:</div>
<svg class="a" style="left:1165.0px;top:93.7px" width="7" height="7"><path d="M3.5 1v5M1.3 2.3l4.4 2.4M5.7 2.3L1.3 4.7" stroke="#d8203a" stroke-width="1.1"/></svg>
<div class="a" style="left:1078px;top:109px;width:140px;height:22px;background:#fff;border-top:1px solid #808080;border-left:1px solid #808080;border-bottom:1px solid #fff;border-right:1px solid #fff;box-sizing:border-box"></div>
<div class="a" style="left:1079px;top:110px;width:138px;height:20px;border-top:1px solid #404040;border-left:1px solid #404040;border-bottom:1px solid #d6d3ce;border-right:1px solid #d6d3ce;box-sizing:border-box"></div>
<div class="a" style="left:1202px;top:111px;width:14px;height:18px;background:#d6d3ce;border-top:1px solid #fff;border-left:1px solid #fff;border-bottom:1px solid #404040;border-right:1px solid #404040;box-sizing:border-box"></div>
<div class="a" style="left:1203px;top:112px;width:12px;height:16px;border-bottom:1px solid #808080;border-right:1px solid #808080;box-sizing:border-box"></div>
<svg class="a" style="left:1202px;top:111px" width="14" height="18"><path d="M3.5 7.5h7l-3.5 4z" fill="#000"/></svg>
<div class="t" style="left:1080.50px;top:112.65px;font-size:14px;line-height:14px;color:#1212ac;font-weight:700;transform:scaleX(0.9976);transform-origin:0 0;">BASE</div>
<div class="a" style="left:1223px;top:103px;width:157px;height:32px;background:#fff;border:1px solid #3a3a3a;box-sizing:border-box"></div>
<div class="t" style="left:1234.00px;top:106.47px;font-size:20px;line-height:20px;color:#1212ac;font-weight:700;transform:scaleX(1.0006);transform-origin:0 0;">WS0004.08.24</div>
<div class="t" style="left:579.80px;top:138.65px;font-size:14px;line-height:14px;color:#333333;font-weight:400;transform:scaleX(0.9876);transform-origin:0 0;">WO Date:</div>
<svg class="a" style="left:657.9px;top:138.5px" width="7" height="7"><path d="M3.5 1v5M1.3 2.3l4.4 2.4M5.7 2.3L1.3 4.7" stroke="#d8203a" stroke-width="1.1"/></svg>
<div class="a" style="left:675px;top:130px;width:43px;height:24px;background:#c9c5fb;border-top:1px solid #fff;border-left:1px solid #fff;border-bottom:1px solid #404040;border-right:1px solid #404040;box-sizing:border-box"></div>
<div class="a" style="left:676px;top:131px;width:41px;height:22px;border-bottom:1px solid #808080;border-right:1px solid #808080;box-sizing:border-box"></div>
<svg class="a" style="left:689px;top:135px" width="14" height="13"><rect x="0.5" y="0.5" width="13" height="12" fill="#f2eef0" stroke="#181830"/><rect x="0" y="0" width="14" height="2.6" fill="#0818c8"/><path d="M1 5.5h12M1 8.5h12" stroke="#c07080" stroke-width="1"/><path d="M5 2.5v10M9.5 2.5v10" stroke="#403040" stroke-width="1"/><path d="M3 4v8M7 4v8M11.5 4v8" stroke="#80a080" stroke-width="0.6"/><rect x="0" y="11.5" width="14" height="1.5" fill="#000"/></svg>
<div class="a" style="left:561px;top:153px;width:114px;height:26px;background:#fff;border:1px solid #3a3a3a;box-sizing:border-box"></div>
<div class="t" style="left:590.50px;top:156.15px;font-size:14px;line-height:14px;color:#1212ac;font-weight:700;transform:scaleX(1.0000);transform-origin:0 0;">21.08.24</div>
<div class="a" style="left:674px;top:153px;width:72px;height:26px;background:#fff;border:1px solid #3a3a3a;box-sizing:border-box"></div>
<div class="t" style="left:690.70px;top:156.15px;font-size:14px;line-height:14px;color:#1212ac;font-weight:700;transform:scaleX(1.0276);transform-origin:0 0;">04:28</div>
<div class="t" style="left:896.80px;top:138.75px;font-size:14px;line-height:14px;color:#333333;font-weight:400;transform:scaleX(0.9525);transform-origin:0 0;">Customer:</div>
<svg class="a" style="left:966.5px;top:138.8px" width="7" height="7"><path d="M3.5 1v5M1.3 2.3l4.4 2.4M5.7 2.3L1.3 4.7" stroke="#d8203a" stroke-width="1.1"/></svg>
<div class="a" style="left:751px;top:153px;width:367px;height:24px;background:#fff;border-top:1px solid #808080;border-left:1px solid #808080;border-bottom:1px solid #fff;border-right:1px solid #fff;box-sizing:border-box"></div>
<div class="a" style="left:752px;top:154px;width:365px;height:22px;border-top:1px solid #404040;border-left:1px solid #404040;border-bottom:1px solid #d6d3ce;border-right:1px solid #d6d3ce;box-sizing:border-box"></div>
<div class="a" style="left:1102px;top:155px;width:14px;height:20px;background:#d6d3ce;border-top:1px solid #fff;border-left:1px solid #fff;border-bottom:1px solid #404040;border-right:1px solid #404040;box-sizing:border-box"></div>
<div class="a" style="left:1103px;top:156px;width:12px;height:18px;border-bottom:1px solid #808080;border-right:1px solid #808080;box-sizing:border-box"></div>
<svg class="a" style="left:1102px;top:155px" width="14" height="20"><path d="M3.5 8.5h7l-3.5 4z" fill="#000"/></svg>
<div class="t" style="left:754.00px;top:156.95px;font-size:14px;line-height:14px;color:#1212ac;font-weight:700;transform:scaleX(0.9921);transform-origin:0 0;">Flug OU</div>
<div class="t" style="left:1167.70px;top:138.75px;font-size:14px;line-height:14px;color:#333333;font-weight:400;transform:scaleX(0.9668);transform-origin:0 0;">Customer Order Reference:</div>
<svg class="a" style="left:1361.5px;top:138.8px" width="7" height="7"><path d="M3.5 1v5M1.3 2.3l4.4 2.4M5.7 2.3L1.3 4.7" stroke="#d8203a" stroke-width="1.1"/></svg>
<div class="a" style="left:1124px;top:153px;width:256px;height:26px;background:#fff;border:1px solid #3a3a3a;box-sizing:border-box"></div>
<div class="t" style="left:1211.70px;top:157.07px;font-size:13.5px;line-height:13.5px;color:#1212ac;font-weight:700;transform:scaleX(1.0220);transform-origin:0 0;">FL5356/05-1</div>
<div class="t" style="left:656.40px;top:182.95px;font-size:14px;line-height:14px;color:#333333;font-weight:400;transform:scaleX(0.9212);transform-origin:0 0;">PN:</div>
<svg class="a" style="left:700.5px;top:183.6px" width="7" height="7"><path d="M3.5 1v5M1.3 2.3l4.4 2.4M5.7 2.3L1.3 4.7" stroke="#d8203a" stroke-width="1.1"/></svg>
<div class="a" style="left:751px;top:178px;width:154px;height:21px;background:#fff;border:1px solid #3a3a3a;box-sizing:border-box"></div>
<div class="t" style="left:912.80px;top:182.75px;font-size:14px;line-height:14px;color:#333333;font-weight:400;transform:scaleX(0.9084);transform-origin:0 0;">SN:</div>
<svg class="a" style="left:953.5px;top:183.6px" width="7" height="7"><path d="M3.5 1v5M1.3 2.3l4.4 2.4M5.7 2.3L1.3 4.7" stroke="#d8203a" stroke-width="1.1"/></svg>
<div class="t" style="left:1080.50px;top:182.75px;font-size:14px;line-height:14px;color:#333333;font-weight:400;transform:scaleX(0.9686);transform-origin:0 0;">A/C Type:</div>
<div class="a" style="left:561px;top:199px;width:226px;height:22px;background:#fff;border-top:1px solid #808080;border-left:1px solid #808080;border-bottom:1px solid #fff;border-right:1px solid #fff;box-sizing:border-box"></div>
<div class="a" style="left:562px;top:200px;width:224px;height:20px;border-top:1px solid #404040;border-left:1px solid #404040;border-bottom:1px solid #d6d3ce;border-right:1px solid #d6d3ce;box-sizing:border-box"></div>
<div class="a" style="left:771px;top:201px;width:14px;height:18px;background:#d6d3ce;border-top:1px solid #fff;border-left:1px solid #fff;border-bottom:1px solid #404040;border-right:1px solid #404040;box-sizing:border-box"></div>
<div class="a" style="left:772px;top:202px;width:12px;height:16px;border-bottom:1px solid #808080;border-right:1px solid #808080;box-sizing:border-box"></div>
<svg class="a" style="left:771px;top:201px" width="14" height="18"><path d="M3.5 7.5h7l-3.5 4z" fill="#000"/></svg>
<div class="t" style="left:563.00px;top:202.05px;font-size:14px;line-height:14px;color:#1212ac;font-weight:700;transform:scaleX(1.0179);transform-origin:0 0;">90000582</div>
<div class="a" style="left:796px;top:198px;width:255px;height:25px;background:#fff;border:1px solid #3a3a3a;box-sizing:border-box"></div>
<div class="t" style="left:915.40px;top:201.45px;font-size:14px;line-height:14px;color:#1212ac;font-weight:700;transform:scaleX(1.0021);transform-origin:0 0;">84</div>
<div class="a" style="left:1054px;top:198px;width:126px;height:23px;background:#fff;border-top:1px solid #808080;border-left:1px solid #808080;border-bottom:1px solid #fff;border-right:1px solid #fff;box-sizing:border-box"></div>
<div class="a" style="left:1055px;top:199px;width:124px;height:21px;border-top:1px solid #404040;border-left:1px solid #404040;border-bottom:1px solid #d6d3ce;border-right:1px solid #d6d3ce;box-sizing:border-box"></div>
<div class="a" style="left:1164px;top:200px;width:14px;height:19px;background:#d6d3ce;border-top:1px solid #fff;border-left:1px solid #fff;border-bottom:1px solid #404040;border-right:1px solid #404040;box-sizing:border-box"></div>
<div class="a" style="left:1165px;top:201px;width:12px;height:17px;border-bottom:1px solid #808080;border-right:1px solid #808080;box-sizing:border-box"></div>
<svg class="a" style="left:1164px;top:200px" width="14" height="19"><path d="M3.5 8.0h7l-3.5 4z" fill="#000"/></svg>
<div class="t" style="left:1056.30px;top:202.15px;font-size:14px;line-height:14px;color:#1212ac;font-weight:700;transform:scaleX(1.0039);transform-origin:0 0;">ERJ 170</div>
<div class="t" style="left:736.00px;top:226.55px;font-size:14px;line-height:14px;color:#333333;font-weight:400;transform:scaleX(0.9835);transform-origin:0 0;">Description:</div>
<svg class="a" style="left:841.2px;top:227.5px" width="7" height="7"><path d="M3.5 1v5M1.3 2.3l4.4 2.4M5.7 2.3L1.3 4.7" stroke="#d8203a" stroke-width="1.1"/></svg>
<div class="t" style="left:1038.40px;top:226.35px;font-size:14px;line-height:14px;color:#333333;font-weight:400;transform:scaleX(0.9572);transform-origin:0 0;">Contract Type:</div>
<svg class="a" style="left:1152.0px;top:227.0px" width="7" height="7"><path d="M3.5 1v5M1.3 2.3l4.4 2.4M5.7 2.3L1.3 4.7" stroke="#d8203a" stroke-width="1.1"/></svg>
<div class="t" style="left:1196.00px;top:226.35px;font-size:14px;line-height:14px;color:#333333;font-weight:400;transform:scaleX(0.9507);transform-origin:0 0;">A/C Reg:</div>
<svg class="a" style="left:1264.0px;top:227.0px" width="7" height="7"><path d="M3.5 1v5M1.3 2.3l4.4 2.4M5.7 2.3L1.3 4.7" stroke="#d8203a" stroke-width="1.1"/></svg>
<div class="t" style="left:1296.70px;top:226.35px;font-size:14px;line-height:14px;color:#333333;font-weight:400;transform:scaleX(0.9424);transform-origin:0 0;">Treatment:</div>
<svg class="a" style="left:1372.8px;top:226.5px" width="7" height="7"><path d="M3.5 1v5M1.3 2.3l4.4 2.4M5.7 2.3L1.3 4.7" stroke="#d8203a" stroke-width="1.1"/></svg>
<div class="a" style="left:561px;top:243px;width:424px;height:25px;background:#fff;border:1px solid #3a3a3a;box-sizing:border-box"></div>
<div class="t" style="left:563.00px;top:245.25px;font-size:14px;line-height:14px;color:#1212ac;font-weight:700;transform:scaleX(0.9989);transform-origin:0 0;">ERJ MAIN WHEEL ASSY</div>
<div class="a" style="left:990px;top:242px;width:184px;height:24px;background:#fff;border-top:1px solid #808080;border-left:1px solid #808080;border-bottom:1px solid #fff;border-right:1px solid #fff;box-sizing:border-box"></div>
<div class="a" style="left:991px;top:243px;width:182px;height:22px;border-top:1px solid #404040;border-left:1px solid #404040;border-bottom:1px solid #d6d3ce;border-right:1px solid #d6d3ce;box-sizing:border-box"></div>
<div class="a" style="left:1158px;top:244px;width:14px;height:20px;background:#d6d3ce;border-top:1px solid #fff;border-left:1px solid #fff;border-bottom:1px solid #404040;border-right:1px solid #404040;box-sizing:border-box"></div>
<div class="a" style="left:1159px;top:245px;width:12px;height:18px;border-bottom:1px solid #808080;border-right:1px solid #808080;box-sizing:border-box"></div>
<svg class="a" style="left:1158px;top:244px" width="14" height="20"><path d="M3.5 8.5h7l-3.5 4z" fill="#000"/></svg>
<div class="t" style="left:993.00px;top:246.15px;font-size:14px;line-height:14px;color:#1212ac;font-weight:700;transform:scaleX(0.9893);transform-origin:0 0;">NA</div>
<div class="a" style="left:1180px;top:242px;width:100px;height:24px;background:#fff;border-top:1px solid #808080;border-left:1px solid #808080;border-bottom:1px solid #fff;border-right:1px solid #fff;box-sizing:border-box"></div>
<div class="a" style="left:1181px;top:243px;width:98px;height:22px;border-top:1px solid #404040;border-left:1px solid #404040;border-bottom:1px solid #d6d3ce;border-right:1px solid #d6d3ce;box-sizing:border-box"></div>
<div class="a" style="left:1264px;top:244px;width:14px;height:20px;background:#d6d3ce;border-top:1px solid #fff;border-left:1px solid #fff;border-bottom:1px solid #404040;border-right:1px solid #404040;box-sizing:border-box"></div>
<div class="a" style="left:1265px;top:245px;width:12px;height:18px;border-bottom:1px solid #808080;border-right:1px solid #808080;box-sizing:border-box"></div>
<svg class="a" style="left:1264px;top:244px" width="14" height="20"><path d="M3.5 8.5h7l-3.5 4z" fill="#000"/></svg>
<div class="t" style="left:1182.60px;top:246.15px;font-size:14px;line-height:14px;color:#1212ac;font-weight:700;transform:scaleX(1.0154);transform-origin:0 0;">VP-BWW</div>
<div class="a" style="left:1293px;top:242px;width:86px;height:24px;background:#fff;border-top:1px solid #808080;border-left:1px solid #808080;border-bottom:1px solid #fff;border-right:1px solid #fff;box-sizing:border-box"></div>
<div class="a" style="left:1294px;top:243px;width:84px;height:22px;border-top:1px solid #404040;border-left:1px solid #404040;border-bottom:1px solid #d6d3ce;border-right:1px solid #d6d3ce;box-sizing:border-box"></div>
<div class="a" style="left:1363px;top:244px;width:14px;height:20px;background:#d6d3ce;border-top:1px solid #fff;border-left:1px solid #fff;border-bottom:1px solid #404040;border-right:1px solid #404040;box-sizing:border-box"></div>
<div class="a" style="left:1364px;top:245px;width:12px;height:18px;border-bottom:1px solid #808080;border-right:1px solid #808080;box-sizing:border-box"></div>
<svg class="a" style="left:1363px;top:244px" width="14" height="20"><path d="M3.5 8.5h7l-3.5 4z" fill="#000"/></svg>
<div class="t" style="left:1295.60px;top:246.15px;font-size:14px;line-height:14px;color:#1212ac;font-weight:700;transform:scaleX(1.0075);transform-origin:0 0;">REP</div>
<div class="a" style="left:561px;top:286px;width:323px;height:75px;border:1px solid #808080;box-sizing:border-box"></div>
<div class="a" style="left:562px;top:287px;width:321px;height:73px;border-top:1px solid #fff;border-left:1px solid #fff;box-sizing:border-box"></div>
<div class="a" style="left:561px;top:361px;width:324px;height:1px;background:#fff"></div>
<div class="a" style="left:884px;top:286px;width:1px;height:76px;background:#fff"></div>
<div class="a" style="left:566px;top:278px;width:43px;height:16px;background:#d6d3ce"></div>
<div class="t" style="left:570.00px;top:278.57px;font-size:13.5px;line-height:13.5px;color:#000;font-weight:700;transform:scaleX(0.9983);transform-origin:0 0;">Time:</div>
<div class="t" style="left:583.00px;top:300.35px;font-size:14px;line-height:14px;color:#636363;font-weight:400;transform:scaleX(0.9493);transform-origin:0 0;">TSO :</div>
<div class="t" style="left:738.30px;top:300.35px;font-size:14px;line-height:14px;color:#636363;font-weight:400;transform:scaleX(0.9334);transform-origin:0 0;">TSN :</div>
<div class="t" style="left:581.50px;top:331.75px;font-size:14px;line-height:14px;color:#636363;font-weight:400;transform:scaleX(0.9732);transform-origin:0 0;">CSO :</div>
<div class="t" style="left:741.00px;top:331.75px;font-size:14px;line-height:14px;color:#636363;font-weight:400;transform:scaleX(0.9374);transform-origin:0 0;">CSN :</div>
<div class="a" style="left:631px;top:298px;width:88px;height:26px;background:#fff;border:1px solid #3a3a3a;box-sizing:border-box"></div>
<div class="t" style="left:664.20px;top:301.55px;font-size:14px;line-height:14px;color:#1212ac;font-weight:700;transform:scaleX(0.9844);transform-origin:0 0;">NA</div>
<div class="a" style="left:786px;top:298px;width:88px;height:26px;background:#fff;border:1px solid #3a3a3a;box-sizing:border-box"></div>
<div class="t" style="left:819.20px;top:301.55px;font-size:14px;line-height:14px;color:#1212ac;font-weight:700;transform:scaleX(0.9844);transform-origin:0 0;">NA</div>
<div class="a" style="left:631px;top:330px;width:88px;height:26px;background:#fff;border:1px solid #3a3a3a;box-sizing:border-box"></div>
<div class="t" style="left:664.20px;top:332.95px;font-size:14px;line-height:14px;color:#1212ac;font-weight:700;transform:scaleX(0.9844);transform-origin:0 0;">NA</div>
<div class="a" style="left:786px;top:330px;width:88px;height:26px;background:#fff;border:1px solid #3a3a3a;box-sizing:border-box"></div>
<div class="t" style="left:819.20px;top:332.95px;font-size:14px;line-height:14px;color:#1212ac;font-weight:700;transform:scaleX(0.9844);transform-origin:0 0;">NA</div>
<div class="a" style="left:887px;top:286px;width:491px;height:75px;border:1px solid #808080;box-sizing:border-box"></div>
<div class="a" style="left:888px;top:287px;width:489px;height:73px;border-top:1px solid #fff;border-left:1px solid #fff;box-sizing:border-box"></div>
<div class="a" style="left:887px;top:361px;width:492px;height:1px;background:#fff"></div>
<div class="a" style="left:1378px;top:286px;width:1px;height:76px;background:#fff"></div>
<div class="a" style="left:891px;top:278px;width:146px;height:16px;background:#d6d3ce"></div>
<div class="t" style="left:893.00px;top:279.07px;font-size:13.5px;line-height:13.5px;color:#000;font-weight:700;transform:scaleX(1.0353);transform-origin:0 0;">Reason for Removal:</div>
<div class="a" style="left:1082px;top:279px;width:15px;height:10px;background:#d6d3ce"></div>
<svg class="a" style="left:1081.8px;top:280.0px" width="7" height="7"><path d="M3.5 1v5M1.3 2.3l4.4 2.4M5.7 2.3L1.3 4.7" stroke="#d8203a" stroke-width="1.1"/></svg>
<div class="a" style="left:899px;top:298px;width:452px;height:59px;background:#fff;border:1px solid #404040;border-right:none;box-sizing:border-box"></div>
<div class="a" style="left:899px;top:298px;width:452px;height:1px;background:#505050"></div>
<div class="t" style="left:901.20px;top:302.57px;font-size:13.5px;line-height:13.5px;color:#1212ac;font-weight:700;transform:scaleX(1.0187);transform-origin:0 0;">Wheel tire is worn.</div>
<div class="a" style="left:1351px;top:298px;width:15px;height:59px;background:#ebe9e5;border-right:1px solid #fff;border-bottom:1px solid #fff;box-sizing:border-box"></div>
<div class="a" style="left:1351px;top:298px;width:15px;height:14px;background:#d6d3ce;border-top:1px solid #fff;border-left:1px solid #fff;border-bottom:1px solid #404040;border-right:1px solid #404040;box-sizing:border-box"></div>
<div class="a" style="left:1352px;top:299px;width:13px;height:12px;border-bottom:1px solid #808080;border-right:1px solid #808080;box-sizing:border-box"></div>
<svg class="a" style="left:1351px;top:298px" width="15" height="14"><path d="M7.5 5l-3 3.5h6z" fill="#909090"/></svg>
<div class="a" style="left:1351px;top:342px;width:15px;height:14px;background:#d6d3ce;border-top:1px solid #fff;border-left:1px solid #fff;border-bottom:1px solid #404040;border-right:1px solid #404040;box-sizing:border-box"></div>
<div class="a" style="left:1352px;top:343px;width:13px;height:12px;border-bottom:1px solid #808080;border-right:1px solid #808080;box-sizing:border-box"></div>
<svg class="a" style="left:1351px;top:342px" width="15" height="14"><path d="M7.5 9l-3-3.5h6z" fill="#909090"/></svg>
<div class="a" style="left:561px;top:370px;width:691px;height:76px;border:1px solid #808080;box-sizing:border-box"></div>
<div class="a" style="left:562px;top:371px;width:689px;height:74px;border-top:1px solid #fff;border-left:1px solid #fff;box-sizing:border-box"></div>
<div class="a" style="left:561px;top:446px;width:692px;height:1px;background:#fff"></div>
<div class="a" style="left:1252px;top:370px;width:1px;height:77px;background:#fff"></div>
<div class="a" style="left:566px;top:362px;width:122px;height:16px;background:#d6d3ce"></div>
<div class="t" style="left:570.00px;top:364.07px;font-size:13.5px;line-height:13.5px;color:#000;font-weight:700;transform:scaleX(1.0355);transform-origin:0 0;">Requested Work:</div>
<div class="a" style="left:730px;top:364px;width:15px;height:10px;background:#d6d3ce"></div>
<svg class="a" style="left:729.5px;top:365.2px" width="7" height="7"><path d="M3.5 1v5M1.3 2.3l4.4 2.4M5.7 2.3L1.3 4.7" stroke="#d8203a" stroke-width="1.1"/></svg>
<div class="a" style="left:575px;top:384px;width:649px;height:58px;background:#fff;border:1px solid #404040;border-right:none;box-sizing:border-box"></div>
<div class="a" style="left:575px;top:384px;width:649px;height:1px;background:#505050"></div>
<div class="t" style="left:577.80px;top:387.47px;font-size:13.5px;line-height:13.5px;color:#1212ac;font-weight:700;transform:scaleX(1.0210);transform-origin:0 0;">Tire replacement is required.</div>
<div class="a" style="left:1224px;top:384px;width:15px;height:58px;background:#ebe9e5;border-right:1px solid #fff;border-bottom:1px solid #fff;box-sizing:border-box"></div>
<div class="a" style="left:1224px;top:384px;width:15px;height:14px;background:#d6d3ce;border-top:1px solid #fff;border-left:1px solid #fff;border-bottom:1px solid #404040;border-right:1px solid #404040;box-sizing:border-box"></div>
<div class="a" style="left:1225px;top:385px;width:13px;height:12px;border-bottom:1px solid #808080;border-right:1px solid #808080;box-sizing:border-box"></div>
<svg class="a" style="left:1224px;top:384px" width="15" height="14"><path d="M7.5 5l-3 3.5h6z" fill="#909090"/></svg>
<div class="a" style="left:1224px;top:427px;width:15px;height:14px;background:#d6d3ce;border-top:1px solid #fff;border-left:1px solid #fff;border-bottom:1px solid #404040;border-right:1px solid #404040;box-sizing:border-box"></div>
<div class="a" style="left:1225px;top:428px;width:13px;height:12px;border-bottom:1px solid #808080;border-right:1px solid #808080;box-sizing:border-box"></div>
<svg class="a" style="left:1224px;top:427px" width="15" height="14"><path d="M7.5 9l-3-3.5h6z" fill="#909090"/></svg>
<div class="a" style="left:1265px;top:371px;width:11px;height:11px;background:#fff;border-top:1px solid #808080;border-left:1px solid #808080;border-bottom:1px solid #fff;border-right:1px solid #fff;box-sizing:border-box"></div>
<div class="a" style="left:1266px;top:372px;width:9px;height:9px;border-top:1px solid #404040;border-left:1px solid #404040;border-bottom:1px solid #d6d3ce;border-right:1px solid #d6d3ce;box-sizing:border-box"></div>
<svg class="a" style="left:1265px;top:371px" width="11" height="11"><path d="M2.6 5.0 L4.6 7.3 L8.6 2.8" stroke="#000" stroke-width="1.7" fill="none"/></svg>
<div class="t" style="left:1281.80px;top:369.64px;font-size:12px;line-height:12px;color:#303030;font-weight:400;transform:scaleX(1.0194);transform-origin:0 0;">Received</div>
<div class="a" style="left:1265px;top:389px;width:11px;height:11px;background:#fff;border-top:1px solid #808080;border-left:1px solid #808080;border-bottom:1px solid #fff;border-right:1px solid #fff;box-sizing:border-box"></div>
<div class="a" style="left:1266px;top:390px;width:9px;height:9px;border-top:1px solid #404040;border-left:1px solid #404040;border-bottom:1px solid #d6d3ce;border-right:1px solid #d6d3ce;box-sizing:border-box"></div>
<svg class="a" style="left:1265px;top:389px" width="11" height="11"><path d="M2.6 5.0 L4.6 7.3 L8.6 2.8" stroke="#000" stroke-width="1.7" fill="none"/></svg>
<div class="t" style="left:1281.80px;top:387.29px;font-size:12px;line-height:12px;color:#303030;font-weight:400;transform:scaleX(1.0248);transform-origin:0 0;">Disassembly</div>
<div class="a" style="left:1265px;top:406px;width:11px;height:11px;background:#fff;border-top:1px solid #808080;border-left:1px solid #808080;border-bottom:1px solid #fff;border-right:1px solid #fff;box-sizing:border-box"></div>
<div class="a" style="left:1266px;top:407px;width:9px;height:9px;border-top:1px solid #404040;border-left:1px solid #404040;border-bottom:1px solid #d6d3ce;border-right:1px solid #d6d3ce;box-sizing:border-box"></div>
<svg class="a" style="left:1265px;top:406px" width="11" height="11"><path d="M2.6 5.0 L4.6 7.3 L8.6 2.8" stroke="#000" stroke-width="1.7" fill="none"/></svg>
<div class="t" style="left:1281.80px;top:404.94px;font-size:12px;line-height:12px;color:#303030;font-weight:400;transform:scaleX(1.0388);transform-origin:0 0;">Cleaning</div>
<div class="a" style="left:1265px;top:424px;width:11px;height:11px;background:#fff;border-top:1px solid #808080;border-left:1px solid #808080;border-bottom:1px solid #fff;border-right:1px solid #fff;box-sizing:border-box"></div>
<div class="a" style="left:1266px;top:425px;width:9px;height:9px;border-top:1px solid #404040;border-left:1px solid #404040;border-bottom:1px solid #d6d3ce;border-right:1px solid #d6d3ce;box-sizing:border-box"></div>
<div class="t" style="left:1281.80px;top:422.59px;font-size:12px;line-height:12px;color:#303030;font-weight:400;transform:scaleX(1.0213);transform-origin:0 0;">Paint Removal</div>
<div class="a" style="left:1265px;top:442px;width:11px;height:11px;background:#fff;border-top:1px solid #808080;border-left:1px solid #808080;border-bottom:1px solid #fff;border-right:1px solid #fff;box-sizing:border-box"></div>
<div class="a" style="left:1266px;top:443px;width:9px;height:9px;border-top:1px solid #404040;border-left:1px solid #404040;border-bottom:1px solid #d6d3ce;border-right:1px solid #d6d3ce;box-sizing:border-box"></div>
<svg class="a" style="left:1265px;top:442px" width="11" height="11"><path d="M2.6 5.0 L4.6 7.3 L8.6 2.8" stroke="#000" stroke-width="1.7" fill="none"/></svg>
<div class="t" style="left:1281.80px;top:440.24px;font-size:12px;line-height:12px;color:#303030;font-weight:400;transform:scaleX(1.0017);transform-origin:0 0;">Inspection</div>
<div class="a" style="left:1265px;top:459px;width:11px;height:11px;background:#fff;border-top:1px solid #808080;border-left:1px solid #808080;border-bottom:1px solid #fff;border-right:1px solid #fff;box-sizing:border-box"></div>
<div class="a" style="left:1266px;top:460px;width:9px;height:9px;border-top:1px solid #404040;border-left:1px solid #404040;border-bottom:1px solid #d6d3ce;border-right:1px solid #d6d3ce;box-sizing:border-box"></div>
<svg class="a" style="left:1265px;top:459px" width="11" height="11"><path d="M2.6 5.0 L4.6 7.3 L8.6 2.8" stroke="#000" stroke-width="1.7" fill="none"/></svg>
<div class="t" style="left:1281.80px;top:457.89px;font-size:12px;line-height:12px;color:#303030;font-weight:400;transform:scaleX(0.9408);transform-origin:0 0;">NDT</div>
<div class="a" style="left:1265px;top:477px;width:11px;height:11px;background:#fff;border-top:1px solid #808080;border-left:1px solid #808080;border-bottom:1px solid #fff;border-right:1px solid #fff;box-sizing:border-box"></div>
<div class="a" style="left:1266px;top:478px;width:9px;height:9px;border-top:1px solid #404040;border-left:1px solid #404040;border-bottom:1px solid #d6d3ce;border-right:1px solid #d6d3ce;box-sizing:border-box"></div>
<svg class="a" style="left:1265px;top:477px" width="11" height="11"><path d="M2.6 5.0 L4.6 7.3 L8.6 2.8" stroke="#000" stroke-width="1.7" fill="none"/></svg>
<div class="t" style="left:1281.80px;top:475.54px;font-size:12px;line-height:12px;color:#303030;font-weight:400;transform:scaleX(1.0240);transform-origin:0 0;">Repair</div>
<div class="a" style="left:1265px;top:495px;width:11px;height:11px;background:#fff;border-top:1px solid #808080;border-left:1px solid #808080;border-bottom:1px solid #fff;border-right:1px solid #fff;box-sizing:border-box"></div>
<div class="a" style="left:1266px;top:496px;width:9px;height:9px;border-top:1px solid #404040;border-left:1px solid #404040;border-bottom:1px solid #d6d3ce;border-right:1px solid #d6d3ce;box-sizing:border-box"></div>
<div class="t" style="left:1281.80px;top:493.19px;font-size:12px;line-height:12px;color:#303030;font-weight:400;transform:scaleX(1.0192);transform-origin:0 0;">Painting</div>
<div class="a" style="left:1265px;top:512px;width:11px;height:11px;background:#fff;border-top:1px solid #808080;border-left:1px solid #808080;border-bottom:1px solid #fff;border-right:1px solid #fff;box-sizing:border-box"></div>
<div class="a" style="left:1266px;top:513px;width:9px;height:9px;border-top:1px solid #404040;border-left:1px solid #404040;border-bottom:1px solid #d6d3ce;border-right:1px solid #d6d3ce;box-sizing:border-box"></div>
<svg class="a" style="left:1265px;top:512px" width="11" height="11"><path d="M2.6 5.0 L4.6 7.3 L8.6 2.8" stroke="#000" stroke-width="1.7" fill="none"/></svg>
<div class="t" style="left:1281.80px;top:510.84px;font-size:12px;line-height:12px;color:#303030;font-weight:400;transform:scaleX(1.0150);transform-origin:0 0;">Assembly</div>
<div class="a" style="left:1281px;top:403px;width:52px;height:15px;border:1px dotted #202020;box-sizing:border-box"></div>
<div class="t" style="left:569.30px;top:447.37px;font-size:13.5px;line-height:13.5px;color:#000;font-weight:700;transform:scaleX(0.9915);transform-origin:0 0;">Note:</div>
<div class="a" style="left:561px;top:460px;width:677px;height:48px;background:#fff;border:1px solid #404040;border-right:none;box-sizing:border-box"></div>
<div class="a" style="left:561px;top:460px;width:677px;height:1px;background:#505050"></div>
<div class="a" style="left:1238px;top:460px;width:15px;height:48px;background:#ebe9e5;border-right:1px solid #fff;border-bottom:1px solid #fff;box-sizing:border-box"></div>
<div class="a" style="left:1238px;top:460px;width:15px;height:14px;background:#d6d3ce;border-top:1px solid #fff;border-left:1px solid #fff;border-bottom:1px solid #404040;border-right:1px solid #404040;box-sizing:border-box"></div>
<div class="a" style="left:1239px;top:461px;width:13px;height:12px;border-bottom:1px solid #808080;border-right:1px solid #808080;box-sizing:border-box"></div>
<svg class="a" style="left:1238px;top:460px" width="15" height="14"><path d="M7.5 5l-3 3.5h6z" fill="#909090"/></svg>
<div class="a" style="left:1238px;top:493px;width:15px;height:14px;background:#d6d3ce;border-top:1px solid #fff;border-left:1px solid #fff;border-bottom:1px solid #404040;border-right:1px solid #404040;box-sizing:border-box"></div>
<div class="a" style="left:1239px;top:494px;width:13px;height:12px;border-bottom:1px solid #808080;border-right:1px solid #808080;box-sizing:border-box"></div>
<svg class="a" style="left:1238px;top:493px" width="15" height="14"><path d="M7.5 9l-3-3.5h6z" fill="#909090"/></svg>
<div class="a" style="left:562px;top:518px;width:11px;height:11px;background:#fff;border-top:1px solid #808080;border-left:1px solid #808080;border-bottom:1px solid #fff;border-right:1px solid #fff;box-sizing:border-box"></div>
<div class="a" style="left:563px;top:519px;width:9px;height:9px;border-top:1px solid #404040;border-left:1px solid #404040;border-bottom:1px solid #d6d3ce;border-right:1px solid #d6d3ce;box-sizing:border-box"></div>
<svg class="a" style="left:562px;top:518px" width="11" height="11"><path d="M2.6 5.0 L4.6 7.3 L8.6 2.8" stroke="#000" stroke-width="1.7" fill="none"/></svg>
<div class="t" style="left:578.60px;top:515.15px;font-size:14px;line-height:14px;color:#000;font-weight:700;transform:scaleX(0.9935);transform-origin:0 0;">Strip Down</div>
<div class="a" style="left:688px;top:518px;width:11px;height:11px;background:#fff;border-top:1px solid #808080;border-left:1px solid #808080;border-bottom:1px solid #fff;border-right:1px solid #fff;box-sizing:border-box"></div>
<div class="a" style="left:689px;top:519px;width:9px;height:9px;border-top:1px solid #404040;border-left:1px solid #404040;border-bottom:1px solid #d6d3ce;border-right:1px solid #d6d3ce;box-sizing:border-box"></div>
<div class="t" style="left:704.70px;top:515.15px;font-size:14px;line-height:14px;color:#8b1010;font-weight:700;transform:scaleX(0.9792);transform-origin:0 0;">On Hold</div>
<div class="a" style="left:562px;top:543px;width:11px;height:11px;background:#fff;border-top:1px solid #808080;border-left:1px solid #808080;border-bottom:1px solid #fff;border-right:1px solid #fff;box-sizing:border-box"></div>
<div class="a" style="left:563px;top:544px;width:9px;height:9px;border-top:1px solid #404040;border-left:1px solid #404040;border-bottom:1px solid #d6d3ce;border-right:1px solid #d6d3ce;box-sizing:border-box"></div>
<div class="t" style="left:579.80px;top:537.92px;font-size:19px;line-height:19px;color:#8b1010;font-weight:700;transform:scaleX(0.9427);transform-origin:0 0;">AOG</div>
<div class="a" style="left:641px;top:543px;width:11px;height:11px;background:#fff;border-top:1px solid #808080;border-left:1px solid #808080;border-bottom:1px solid #fff;border-right:1px solid #fff;box-sizing:border-box"></div>
<div class="a" style="left:642px;top:544px;width:9px;height:9px;border-top:1px solid #404040;border-left:1px solid #404040;border-bottom:1px solid #d6d3ce;border-right:1px solid #d6d3ce;box-sizing:border-box"></div>
<div class="t" style="left:658.00px;top:540.25px;font-size:14px;line-height:14px;color:#6a1010;font-weight:700;transform:scaleX(1.0087);transform-origin:0 0;">Urgent</div>
<div class="a" style="left:726px;top:543px;width:11px;height:11px;background:#fff;border-top:1px solid #808080;border-left:1px solid #808080;border-bottom:1px solid #fff;border-right:1px solid #fff;box-sizing:border-box"></div>
<div class="a" style="left:727px;top:544px;width:9px;height:9px;border-top:1px solid #404040;border-left:1px solid #404040;border-bottom:1px solid #d6d3ce;border-right:1px solid #d6d3ce;box-sizing:border-box"></div>
<svg class="a" style="left:726px;top:543px" width="11" height="11"><path d="M2.6 5.0 L4.6 7.3 L8.6 2.8" stroke="#000" stroke-width="1.7" fill="none"/></svg>
<div class="t" style="left:742.00px;top:540.25px;font-size:14px;line-height:14px;color:#000;font-weight:700;transform:scaleX(1.0075);transform-origin:0 0;">Routine</div>
<div class="t" style="left:819.00px;top:515.75px;font-size:14px;line-height:14px;color:#333333;font-weight:400;transform:scaleX(0.9871);transform-origin:0 0;">DeadLine:</div>
<svg class="a" style="left:893.3px;top:516.0px" width="7" height="7"><path d="M3.5 1v5M1.3 2.3l4.4 2.4M5.7 2.3L1.3 4.7" stroke="#d8203a" stroke-width="1.1"/></svg>
<div class="a" style="left:913px;top:510px;width:38px;height:24px;background:#c9c5fb;border-top:1px solid #fff;border-left:1px solid #fff;border-bottom:1px solid #404040;border-right:1px solid #404040;box-sizing:border-box"></div>
<div class="a" style="left:914px;top:511px;width:36px;height:22px;border-bottom:1px solid #808080;border-right:1px solid #808080;box-sizing:border-box"></div>
<svg class="a" style="left:924px;top:514px" width="14" height="13"><rect x="0.5" y="0.5" width="13" height="12" fill="#f2eef0" stroke="#181830"/><rect x="0" y="0" width="14" height="2.6" fill="#0818c8"/><path d="M1 5.5h12M1 8.5h12" stroke="#c07080" stroke-width="1"/><path d="M5 2.5v10M9.5 2.5v10" stroke="#403040" stroke-width="1"/><path d="M3 4v8M7 4v8M11.5 4v8" stroke="#80a080" stroke-width="0.6"/><rect x="0" y="11.5" width="14" height="1.5" fill="#000"/></svg>
<div class="a" style="left:821px;top:531px;width:129px;height:25px;background:#fff;border:1px solid #3a3a3a;box-sizing:border-box"></div>
<div class="t" style="left:955.60px;top:516.15px;font-size:14px;line-height:14px;color:#333333;font-weight:400;transform:scaleX(0.9548);transform-origin:0 0;">Originator:</div>
<svg class="a" style="left:1035.7px;top:516.0px" width="7" height="7"><path d="M3.5 1v5M1.3 2.3l4.4 2.4M5.7 2.3L1.3 4.7" stroke="#d8203a" stroke-width="1.1"/></svg>
<div class="a" style="left:953px;top:531px;width:70px;height:24px;background:#fff;border-top:1px solid #808080;border-left:1px solid #808080;border-bottom:1px solid #fff;border-right:1px solid #fff;box-sizing:border-box"></div>
<div class="a" style="left:954px;top:532px;width:68px;height:22px;border-top:1px solid #404040;border-left:1px solid #404040;border-bottom:1px solid #d6d3ce;border-right:1px solid #d6d3ce;box-sizing:border-box"></div>
<div class="a" style="left:1007px;top:533px;width:14px;height:20px;background:#d6d3ce;border-top:1px solid #fff;border-left:1px solid #fff;border-bottom:1px solid #404040;border-right:1px solid #404040;box-sizing:border-box"></div>
<div class="a" style="left:1008px;top:534px;width:12px;height:18px;border-bottom:1px solid #808080;border-right:1px solid #808080;box-sizing:border-box"></div>
<svg class="a" style="left:1007px;top:533px" width="14" height="20"><path d="M3.5 8.5h7l-3.5 4z" fill="#000"/></svg>
<div class="t" style="left:1189.00px;top:516.15px;font-size:14px;line-height:14px;color:#333333;font-weight:400;transform:scaleX(0.9653);transform-origin:0 0;">Name:</div>
<div class="a" style="left:1026px;top:531px;width:354px;height:25px;background:#e6e2e6;border:1px solid #505050;box-sizing:border-box"></div>
<div class="a" style="left:547px;top:570px;width:395px;height:151px;border:1px solid #808080;box-sizing:border-box"></div>
<div class="a" style="left:548px;top:571px;width:393px;height:149px;border-top:1px solid #fff;border-left:1px solid #fff;box-sizing:border-box"></div>
<div class="a" style="left:547px;top:721px;width:396px;height:1px;background:#fff"></div>
<div class="a" style="left:942px;top:570px;width:1px;height:152px;background:#fff"></div>
<div class="a" style="left:552px;top:562px;width:228px;height:16px;background:#d6d3ce"></div>
<div class="t" style="left:555.50px;top:563.84px;font-size:12px;line-height:12px;color:#10105a;font-weight:700;transform:scaleX(1.0725);transform-origin:0 0;">Spare Parts Required for Treatment:</div>
<div class="a" style="left:562px;top:585px;width:365px;height:124px;background:#838183;border-top:1px solid #404040;border-left:1px solid #404040;border-bottom:1px solid #fff;border-right:1px solid #fff;box-sizing:border-box"></div>
<div class="a" style="left:563px;top:586px;width:236px;height:17px;background:#d6d3ce;border-top:1px solid #fff;border-left:1px solid #fff;border-bottom:1px solid #404040;border-right:1px solid #404040;box-sizing:border-box"></div>
<div class="a" style="left:564px;top:587px;width:234px;height:15px;border-bottom:1px solid #808080;border-right:1px solid #808080;box-sizing:border-box"></div>
<div class="t" style="left:566.40px;top:588.84px;font-size:12px;line-height:12px;color:#202020;font-weight:400;transform:scaleX(1.0119);transform-origin:0 0;">No Selection !</div>
<div class="a" style="left:941px;top:570px;width:437px;height:151px;border:1px solid #808080;box-sizing:border-box"></div>
<div class="a" style="left:942px;top:571px;width:435px;height:149px;border-top:1px solid #fff;border-left:1px solid #fff;box-sizing:border-box"></div>
<div class="a" style="left:941px;top:721px;width:438px;height:1px;background:#fff"></div>
<div class="a" style="left:1378px;top:570px;width:1px;height:152px;background:#fff"></div>
<div class="a" style="left:946px;top:562px;width:165px;height:16px;background:#d6d3ce"></div>
<div class="t" style="left:949.50px;top:563.34px;font-size:12px;line-height:12px;color:#10105a;font-weight:700;transform:scaleX(1.0740);transform-origin:0 0;">CMM Manual Information:</div>
<div class="a" style="left:956px;top:585px;width:408px;height:124px;background:#838183;border-top:1px solid #404040;border-left:1px solid #404040;border-bottom:1px solid #fff;border-right:1px solid #fff;box-sizing:border-box"></div>
<div class="a" style="left:957px;top:586px;width:236px;height:17px;background:#d6d3ce;border-top:1px solid #fff;border-left:1px solid #fff;border-bottom:1px solid #404040;border-right:1px solid #404040;box-sizing:border-box"></div>
<div class="a" style="left:958px;top:587px;width:234px;height:15px;border-bottom:1px solid #808080;border-right:1px solid #808080;box-sizing:border-box"></div>
<div class="t" style="left:961.00px;top:588.44px;font-size:12px;line-height:12px;color:#202020;font-weight:400;transform:scaleX(1.0065);transform-origin:0 0;">No Selection !</div>
<div class="a" style="left:1398px;top:88px;width:1px;height:632px;background:#e6e4e0"></div>
<svg class="a" style="left:0;top:0" width="1403" height="751"><path d="M848 306 L962.5 398.7 L932.7 425 Z" fill="#1296f6"/><circle cx="956.7" cy="421.8" r="22.5" fill="#1296f6" stroke="#2a2a2a" stroke-width="1.5"/></svg>
<div class="t" style="left:947.60px;top:414.21px;font-size:17px;line-height:17px;color:#fff;font-weight:700;transform:scaleX(1.0686);transform-origin:0 0;">18</div>
</body></html>
